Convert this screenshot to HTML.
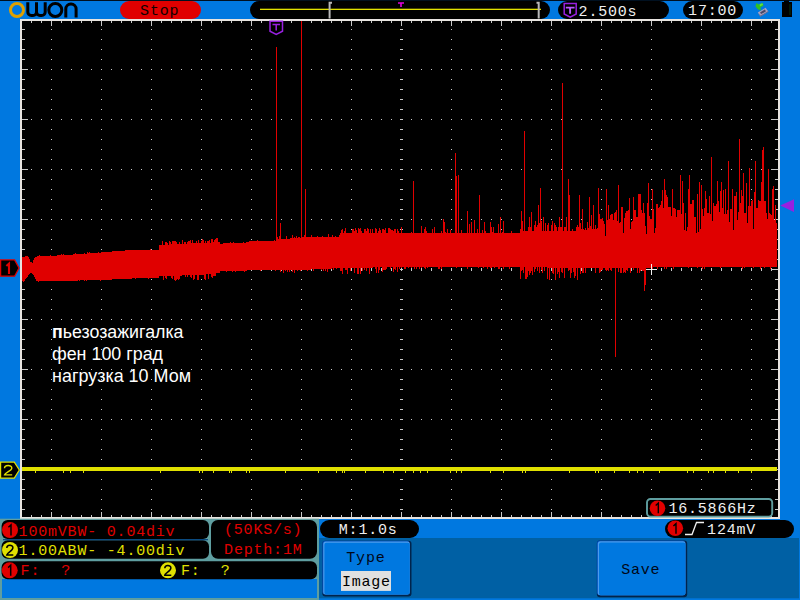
<!DOCTYPE html>
<html><head><meta charset="utf-8"><title>OWON</title>
<style>
html,body{margin:0;padding:0;background:#0078e0;}
body{width:800px;height:600px;overflow:hidden;position:relative;font-family:"Liberation Mono",monospace;}
svg{position:absolute;left:0;top:0;display:block}
text{font-family:"Liberation Mono",monospace;font-size:15px;letter-spacing:0.8px;}
.a{font-family:"Liberation Sans",sans-serif;font-size:17.5px;letter-spacing:0;}
</style></head><body>
<svg width="800" height="600" viewBox="0 0 800 600">
<rect x="0" y="0" width="800" height="600" fill="#0078e0"/>
<rect x="0" y="0" width="800" height="1" fill="#001020"/>
<!-- lower dark area -->
<rect x="319" y="538" width="480" height="60.3" fill="#0060a4"/>

<!-- logo -->
<g fill="none" stroke-width="3" stroke-linejoin="round">
<circle cx="17" cy="10" r="6.5" stroke="#e0a000"/>
<path d="M27.8 2.3V12a3.5 3.5 0 0 0 3.5 3.5h1.7a3.5 3.5 0 0 0 3.5-3.5V2.3M36.5 12a3.5 3.5 0 0 0 3.5 3.5h1.7a3.5 3.5 0 0 0 3.5-3.5V2.3" stroke="#000"/>
<circle cx="55.3" cy="10" r="6.5" stroke="#000"/>
<path d="M65.8 17.5V9a5 5 0 0 1 5-5h0.3a5 5 0 0 1 5 5v8.5" stroke="#000"/>
</g>

<!-- Stop -->
<rect x="120" y="1" width="81" height="18" rx="9" fill="#e00000"/>
<text x="140.1" y="15" fill="#100000">Stop</text>

<!-- position bar -->
<rect x="250" y="1" width="300" height="18" rx="9" fill="#000"/>
<rect x="260" y="8.7" width="281" height="1.3" fill="#e0e000"/>
<path d="M332 2.8H329.6V18.6" fill="none" stroke="#b8b8b8" stroke-width="2"/>
<path d="M536.5 2.8H538.7V18.6" fill="none" stroke="#b8b8b8" stroke-width="2"/>
<path d="M398 3H404M401 3V7" stroke="#e000e0" stroke-width="1.6" fill="none"/>

<!-- T time pill -->
<rect x="558" y="1" width="111" height="18" rx="9" fill="#000"/>
<path d="M564.2 3.5H576.2V14L570.2 17.2L564.2 14Z" fill="#000" stroke="#9820e0" stroke-width="1.5"/>
<path d="M565.8 7.6H574.6M570.1 7.6V13.8" stroke="#b858ff" stroke-width="1.9" fill="none"/>
<text x="578.6" y="15.8" fill="#f0f0f0">2.500s</text>

<!-- clock -->
<rect x="683" y="1" width="60" height="18" rx="9" fill="#000"/>
<text x="688.1" y="15.1" fill="#f0f0f0">17:00</text>

<!-- save icon -->
<g>
<path d="M757.8 12.6L765.6 7.8L768.4 11.6L760.4 16.6Z" fill="#a8a0c0"/>
<path d="M758 13.3L760.4 16.8L768.4 11.8L768.2 11L760.5 15.6Z" fill="#686888"/>
<path d="M760 12.4L764.8 9.6L766 11.3L761.2 14.1Z" fill="#484868"/>
<path d="M755.4 6.2L756.6 3L758.6 4.4L762.6 3L763.6 5.6L760.4 7.4L761 10.4L757.8 9.2Z" fill="#30c020"/>
<path d="M759.6 4.2L762.4 3.3L763 5L760 6.2Z" fill="#60e040"/>
</g>
<!-- battery -->
<rect x="782" y="2" width="10" height="15" fill="#000"/>
<rect x="784" y="0.8" width="5" height="1.4" fill="#000"/>
<rect x="789.6" y="4" width="0.8" height="11" fill="#0a4010"/>

<!-- plot -->
<rect x="20" y="19" width="760" height="500" fill="#e8e4e0"/>
<rect x="22" y="21" width="756" height="496" fill="#000"/>
<g fill="#c8c8c8" shape-rendering="crispEdges">
<rect x="51" y="29" width="1" height="1"/>
<rect x="51" y="39" width="1" height="1"/>
<rect x="51" y="49" width="1" height="1"/>
<rect x="51" y="59" width="1" height="1"/>
<rect x="51" y="69" width="1" height="1"/>
<rect x="51" y="79" width="1" height="1"/>
<rect x="51" y="89" width="1" height="1"/>
<rect x="51" y="99" width="1" height="1"/>
<rect x="51" y="109" width="1" height="1"/>
<rect x="51" y="119" width="1" height="1"/>
<rect x="51" y="129" width="1" height="1"/>
<rect x="51" y="139" width="1" height="1"/>
<rect x="51" y="149" width="1" height="1"/>
<rect x="51" y="159" width="1" height="1"/>
<rect x="51" y="169" width="1" height="1"/>
<rect x="51" y="179" width="1" height="1"/>
<rect x="51" y="189" width="1" height="1"/>
<rect x="51" y="199" width="1" height="1"/>
<rect x="51" y="209" width="1" height="1"/>
<rect x="51" y="219" width="1" height="1"/>
<rect x="51" y="229" width="1" height="1"/>
<rect x="51" y="239" width="1" height="1"/>
<rect x="51" y="249" width="1" height="1"/>
<rect x="51" y="259" width="1" height="1"/>
<rect x="51" y="269" width="1" height="1"/>
<rect x="51" y="279" width="1" height="1"/>
<rect x="51" y="289" width="1" height="1"/>
<rect x="51" y="299" width="1" height="1"/>
<rect x="51" y="309" width="1" height="1"/>
<rect x="51" y="319" width="1" height="1"/>
<rect x="51" y="329" width="1" height="1"/>
<rect x="51" y="339" width="1" height="1"/>
<rect x="51" y="349" width="1" height="1"/>
<rect x="51" y="359" width="1" height="1"/>
<rect x="51" y="369" width="1" height="1"/>
<rect x="51" y="379" width="1" height="1"/>
<rect x="51" y="389" width="1" height="1"/>
<rect x="51" y="399" width="1" height="1"/>
<rect x="51" y="409" width="1" height="1"/>
<rect x="51" y="419" width="1" height="1"/>
<rect x="51" y="429" width="1" height="1"/>
<rect x="51" y="439" width="1" height="1"/>
<rect x="51" y="449" width="1" height="1"/>
<rect x="51" y="459" width="1" height="1"/>
<rect x="51" y="469" width="1" height="1"/>
<rect x="51" y="479" width="1" height="1"/>
<rect x="51" y="489" width="1" height="1"/>
<rect x="51" y="499" width="1" height="1"/>
<rect x="51" y="509" width="1" height="1"/>
<rect x="101" y="29" width="1" height="1"/>
<rect x="101" y="39" width="1" height="1"/>
<rect x="101" y="49" width="1" height="1"/>
<rect x="101" y="59" width="1" height="1"/>
<rect x="101" y="69" width="1" height="1"/>
<rect x="101" y="79" width="1" height="1"/>
<rect x="101" y="89" width="1" height="1"/>
<rect x="101" y="99" width="1" height="1"/>
<rect x="101" y="109" width="1" height="1"/>
<rect x="101" y="119" width="1" height="1"/>
<rect x="101" y="129" width="1" height="1"/>
<rect x="101" y="139" width="1" height="1"/>
<rect x="101" y="149" width="1" height="1"/>
<rect x="101" y="159" width="1" height="1"/>
<rect x="101" y="169" width="1" height="1"/>
<rect x="101" y="179" width="1" height="1"/>
<rect x="101" y="189" width="1" height="1"/>
<rect x="101" y="199" width="1" height="1"/>
<rect x="101" y="209" width="1" height="1"/>
<rect x="101" y="219" width="1" height="1"/>
<rect x="101" y="229" width="1" height="1"/>
<rect x="101" y="239" width="1" height="1"/>
<rect x="101" y="249" width="1" height="1"/>
<rect x="101" y="259" width="1" height="1"/>
<rect x="101" y="269" width="1" height="1"/>
<rect x="101" y="279" width="1" height="1"/>
<rect x="101" y="289" width="1" height="1"/>
<rect x="101" y="299" width="1" height="1"/>
<rect x="101" y="309" width="1" height="1"/>
<rect x="101" y="319" width="1" height="1"/>
<rect x="101" y="329" width="1" height="1"/>
<rect x="101" y="339" width="1" height="1"/>
<rect x="101" y="349" width="1" height="1"/>
<rect x="101" y="359" width="1" height="1"/>
<rect x="101" y="369" width="1" height="1"/>
<rect x="101" y="379" width="1" height="1"/>
<rect x="101" y="389" width="1" height="1"/>
<rect x="101" y="399" width="1" height="1"/>
<rect x="101" y="409" width="1" height="1"/>
<rect x="101" y="419" width="1" height="1"/>
<rect x="101" y="429" width="1" height="1"/>
<rect x="101" y="439" width="1" height="1"/>
<rect x="101" y="449" width="1" height="1"/>
<rect x="101" y="459" width="1" height="1"/>
<rect x="101" y="469" width="1" height="1"/>
<rect x="101" y="479" width="1" height="1"/>
<rect x="101" y="489" width="1" height="1"/>
<rect x="101" y="499" width="1" height="1"/>
<rect x="101" y="509" width="1" height="1"/>
<rect x="151" y="29" width="1" height="1"/>
<rect x="151" y="39" width="1" height="1"/>
<rect x="151" y="49" width="1" height="1"/>
<rect x="151" y="59" width="1" height="1"/>
<rect x="151" y="69" width="1" height="1"/>
<rect x="151" y="79" width="1" height="1"/>
<rect x="151" y="89" width="1" height="1"/>
<rect x="151" y="99" width="1" height="1"/>
<rect x="151" y="109" width="1" height="1"/>
<rect x="151" y="119" width="1" height="1"/>
<rect x="151" y="129" width="1" height="1"/>
<rect x="151" y="139" width="1" height="1"/>
<rect x="151" y="149" width="1" height="1"/>
<rect x="151" y="159" width="1" height="1"/>
<rect x="151" y="169" width="1" height="1"/>
<rect x="151" y="179" width="1" height="1"/>
<rect x="151" y="189" width="1" height="1"/>
<rect x="151" y="199" width="1" height="1"/>
<rect x="151" y="209" width="1" height="1"/>
<rect x="151" y="219" width="1" height="1"/>
<rect x="151" y="229" width="1" height="1"/>
<rect x="151" y="239" width="1" height="1"/>
<rect x="151" y="249" width="1" height="1"/>
<rect x="151" y="259" width="1" height="1"/>
<rect x="151" y="269" width="1" height="1"/>
<rect x="151" y="279" width="1" height="1"/>
<rect x="151" y="289" width="1" height="1"/>
<rect x="151" y="299" width="1" height="1"/>
<rect x="151" y="309" width="1" height="1"/>
<rect x="151" y="319" width="1" height="1"/>
<rect x="151" y="329" width="1" height="1"/>
<rect x="151" y="339" width="1" height="1"/>
<rect x="151" y="349" width="1" height="1"/>
<rect x="151" y="359" width="1" height="1"/>
<rect x="151" y="369" width="1" height="1"/>
<rect x="151" y="379" width="1" height="1"/>
<rect x="151" y="389" width="1" height="1"/>
<rect x="151" y="399" width="1" height="1"/>
<rect x="151" y="409" width="1" height="1"/>
<rect x="151" y="419" width="1" height="1"/>
<rect x="151" y="429" width="1" height="1"/>
<rect x="151" y="439" width="1" height="1"/>
<rect x="151" y="449" width="1" height="1"/>
<rect x="151" y="459" width="1" height="1"/>
<rect x="151" y="469" width="1" height="1"/>
<rect x="151" y="479" width="1" height="1"/>
<rect x="151" y="489" width="1" height="1"/>
<rect x="151" y="499" width="1" height="1"/>
<rect x="151" y="509" width="1" height="1"/>
<rect x="201" y="29" width="1" height="1"/>
<rect x="201" y="39" width="1" height="1"/>
<rect x="201" y="49" width="1" height="1"/>
<rect x="201" y="59" width="1" height="1"/>
<rect x="201" y="69" width="1" height="1"/>
<rect x="201" y="79" width="1" height="1"/>
<rect x="201" y="89" width="1" height="1"/>
<rect x="201" y="99" width="1" height="1"/>
<rect x="201" y="109" width="1" height="1"/>
<rect x="201" y="119" width="1" height="1"/>
<rect x="201" y="129" width="1" height="1"/>
<rect x="201" y="139" width="1" height="1"/>
<rect x="201" y="149" width="1" height="1"/>
<rect x="201" y="159" width="1" height="1"/>
<rect x="201" y="169" width="1" height="1"/>
<rect x="201" y="179" width="1" height="1"/>
<rect x="201" y="189" width="1" height="1"/>
<rect x="201" y="199" width="1" height="1"/>
<rect x="201" y="209" width="1" height="1"/>
<rect x="201" y="219" width="1" height="1"/>
<rect x="201" y="229" width="1" height="1"/>
<rect x="201" y="239" width="1" height="1"/>
<rect x="201" y="249" width="1" height="1"/>
<rect x="201" y="259" width="1" height="1"/>
<rect x="201" y="269" width="1" height="1"/>
<rect x="201" y="279" width="1" height="1"/>
<rect x="201" y="289" width="1" height="1"/>
<rect x="201" y="299" width="1" height="1"/>
<rect x="201" y="309" width="1" height="1"/>
<rect x="201" y="319" width="1" height="1"/>
<rect x="201" y="329" width="1" height="1"/>
<rect x="201" y="339" width="1" height="1"/>
<rect x="201" y="349" width="1" height="1"/>
<rect x="201" y="359" width="1" height="1"/>
<rect x="201" y="369" width="1" height="1"/>
<rect x="201" y="379" width="1" height="1"/>
<rect x="201" y="389" width="1" height="1"/>
<rect x="201" y="399" width="1" height="1"/>
<rect x="201" y="409" width="1" height="1"/>
<rect x="201" y="419" width="1" height="1"/>
<rect x="201" y="429" width="1" height="1"/>
<rect x="201" y="439" width="1" height="1"/>
<rect x="201" y="449" width="1" height="1"/>
<rect x="201" y="459" width="1" height="1"/>
<rect x="201" y="469" width="1" height="1"/>
<rect x="201" y="479" width="1" height="1"/>
<rect x="201" y="489" width="1" height="1"/>
<rect x="201" y="499" width="1" height="1"/>
<rect x="201" y="509" width="1" height="1"/>
<rect x="251" y="29" width="1" height="1"/>
<rect x="251" y="39" width="1" height="1"/>
<rect x="251" y="49" width="1" height="1"/>
<rect x="251" y="59" width="1" height="1"/>
<rect x="251" y="69" width="1" height="1"/>
<rect x="251" y="79" width="1" height="1"/>
<rect x="251" y="89" width="1" height="1"/>
<rect x="251" y="99" width="1" height="1"/>
<rect x="251" y="109" width="1" height="1"/>
<rect x="251" y="119" width="1" height="1"/>
<rect x="251" y="129" width="1" height="1"/>
<rect x="251" y="139" width="1" height="1"/>
<rect x="251" y="149" width="1" height="1"/>
<rect x="251" y="159" width="1" height="1"/>
<rect x="251" y="169" width="1" height="1"/>
<rect x="251" y="179" width="1" height="1"/>
<rect x="251" y="189" width="1" height="1"/>
<rect x="251" y="199" width="1" height="1"/>
<rect x="251" y="209" width="1" height="1"/>
<rect x="251" y="219" width="1" height="1"/>
<rect x="251" y="229" width="1" height="1"/>
<rect x="251" y="239" width="1" height="1"/>
<rect x="251" y="249" width="1" height="1"/>
<rect x="251" y="259" width="1" height="1"/>
<rect x="251" y="269" width="1" height="1"/>
<rect x="251" y="279" width="1" height="1"/>
<rect x="251" y="289" width="1" height="1"/>
<rect x="251" y="299" width="1" height="1"/>
<rect x="251" y="309" width="1" height="1"/>
<rect x="251" y="319" width="1" height="1"/>
<rect x="251" y="329" width="1" height="1"/>
<rect x="251" y="339" width="1" height="1"/>
<rect x="251" y="349" width="1" height="1"/>
<rect x="251" y="359" width="1" height="1"/>
<rect x="251" y="369" width="1" height="1"/>
<rect x="251" y="379" width="1" height="1"/>
<rect x="251" y="389" width="1" height="1"/>
<rect x="251" y="399" width="1" height="1"/>
<rect x="251" y="409" width="1" height="1"/>
<rect x="251" y="419" width="1" height="1"/>
<rect x="251" y="429" width="1" height="1"/>
<rect x="251" y="439" width="1" height="1"/>
<rect x="251" y="449" width="1" height="1"/>
<rect x="251" y="459" width="1" height="1"/>
<rect x="251" y="469" width="1" height="1"/>
<rect x="251" y="479" width="1" height="1"/>
<rect x="251" y="489" width="1" height="1"/>
<rect x="251" y="499" width="1" height="1"/>
<rect x="251" y="509" width="1" height="1"/>
<rect x="301" y="29" width="1" height="1"/>
<rect x="301" y="39" width="1" height="1"/>
<rect x="301" y="49" width="1" height="1"/>
<rect x="301" y="59" width="1" height="1"/>
<rect x="301" y="69" width="1" height="1"/>
<rect x="301" y="79" width="1" height="1"/>
<rect x="301" y="89" width="1" height="1"/>
<rect x="301" y="99" width="1" height="1"/>
<rect x="301" y="109" width="1" height="1"/>
<rect x="301" y="119" width="1" height="1"/>
<rect x="301" y="129" width="1" height="1"/>
<rect x="301" y="139" width="1" height="1"/>
<rect x="301" y="149" width="1" height="1"/>
<rect x="301" y="159" width="1" height="1"/>
<rect x="301" y="169" width="1" height="1"/>
<rect x="301" y="179" width="1" height="1"/>
<rect x="301" y="189" width="1" height="1"/>
<rect x="301" y="199" width="1" height="1"/>
<rect x="301" y="209" width="1" height="1"/>
<rect x="301" y="219" width="1" height="1"/>
<rect x="301" y="229" width="1" height="1"/>
<rect x="301" y="239" width="1" height="1"/>
<rect x="301" y="249" width="1" height="1"/>
<rect x="301" y="259" width="1" height="1"/>
<rect x="301" y="269" width="1" height="1"/>
<rect x="301" y="279" width="1" height="1"/>
<rect x="301" y="289" width="1" height="1"/>
<rect x="301" y="299" width="1" height="1"/>
<rect x="301" y="309" width="1" height="1"/>
<rect x="301" y="319" width="1" height="1"/>
<rect x="301" y="329" width="1" height="1"/>
<rect x="301" y="339" width="1" height="1"/>
<rect x="301" y="349" width="1" height="1"/>
<rect x="301" y="359" width="1" height="1"/>
<rect x="301" y="369" width="1" height="1"/>
<rect x="301" y="379" width="1" height="1"/>
<rect x="301" y="389" width="1" height="1"/>
<rect x="301" y="399" width="1" height="1"/>
<rect x="301" y="409" width="1" height="1"/>
<rect x="301" y="419" width="1" height="1"/>
<rect x="301" y="429" width="1" height="1"/>
<rect x="301" y="439" width="1" height="1"/>
<rect x="301" y="449" width="1" height="1"/>
<rect x="301" y="459" width="1" height="1"/>
<rect x="301" y="469" width="1" height="1"/>
<rect x="301" y="479" width="1" height="1"/>
<rect x="301" y="489" width="1" height="1"/>
<rect x="301" y="499" width="1" height="1"/>
<rect x="301" y="509" width="1" height="1"/>
<rect x="351" y="29" width="1" height="1"/>
<rect x="351" y="39" width="1" height="1"/>
<rect x="351" y="49" width="1" height="1"/>
<rect x="351" y="59" width="1" height="1"/>
<rect x="351" y="69" width="1" height="1"/>
<rect x="351" y="79" width="1" height="1"/>
<rect x="351" y="89" width="1" height="1"/>
<rect x="351" y="99" width="1" height="1"/>
<rect x="351" y="109" width="1" height="1"/>
<rect x="351" y="119" width="1" height="1"/>
<rect x="351" y="129" width="1" height="1"/>
<rect x="351" y="139" width="1" height="1"/>
<rect x="351" y="149" width="1" height="1"/>
<rect x="351" y="159" width="1" height="1"/>
<rect x="351" y="169" width="1" height="1"/>
<rect x="351" y="179" width="1" height="1"/>
<rect x="351" y="189" width="1" height="1"/>
<rect x="351" y="199" width="1" height="1"/>
<rect x="351" y="209" width="1" height="1"/>
<rect x="351" y="219" width="1" height="1"/>
<rect x="351" y="229" width="1" height="1"/>
<rect x="351" y="239" width="1" height="1"/>
<rect x="351" y="249" width="1" height="1"/>
<rect x="351" y="259" width="1" height="1"/>
<rect x="351" y="269" width="1" height="1"/>
<rect x="351" y="279" width="1" height="1"/>
<rect x="351" y="289" width="1" height="1"/>
<rect x="351" y="299" width="1" height="1"/>
<rect x="351" y="309" width="1" height="1"/>
<rect x="351" y="319" width="1" height="1"/>
<rect x="351" y="329" width="1" height="1"/>
<rect x="351" y="339" width="1" height="1"/>
<rect x="351" y="349" width="1" height="1"/>
<rect x="351" y="359" width="1" height="1"/>
<rect x="351" y="369" width="1" height="1"/>
<rect x="351" y="379" width="1" height="1"/>
<rect x="351" y="389" width="1" height="1"/>
<rect x="351" y="399" width="1" height="1"/>
<rect x="351" y="409" width="1" height="1"/>
<rect x="351" y="419" width="1" height="1"/>
<rect x="351" y="429" width="1" height="1"/>
<rect x="351" y="439" width="1" height="1"/>
<rect x="351" y="449" width="1" height="1"/>
<rect x="351" y="459" width="1" height="1"/>
<rect x="351" y="469" width="1" height="1"/>
<rect x="351" y="479" width="1" height="1"/>
<rect x="351" y="489" width="1" height="1"/>
<rect x="351" y="499" width="1" height="1"/>
<rect x="351" y="509" width="1" height="1"/>
<rect x="451" y="29" width="1" height="1"/>
<rect x="451" y="39" width="1" height="1"/>
<rect x="451" y="49" width="1" height="1"/>
<rect x="451" y="59" width="1" height="1"/>
<rect x="451" y="69" width="1" height="1"/>
<rect x="451" y="79" width="1" height="1"/>
<rect x="451" y="89" width="1" height="1"/>
<rect x="451" y="99" width="1" height="1"/>
<rect x="451" y="109" width="1" height="1"/>
<rect x="451" y="119" width="1" height="1"/>
<rect x="451" y="129" width="1" height="1"/>
<rect x="451" y="139" width="1" height="1"/>
<rect x="451" y="149" width="1" height="1"/>
<rect x="451" y="159" width="1" height="1"/>
<rect x="451" y="169" width="1" height="1"/>
<rect x="451" y="179" width="1" height="1"/>
<rect x="451" y="189" width="1" height="1"/>
<rect x="451" y="199" width="1" height="1"/>
<rect x="451" y="209" width="1" height="1"/>
<rect x="451" y="219" width="1" height="1"/>
<rect x="451" y="229" width="1" height="1"/>
<rect x="451" y="239" width="1" height="1"/>
<rect x="451" y="249" width="1" height="1"/>
<rect x="451" y="259" width="1" height="1"/>
<rect x="451" y="269" width="1" height="1"/>
<rect x="451" y="279" width="1" height="1"/>
<rect x="451" y="289" width="1" height="1"/>
<rect x="451" y="299" width="1" height="1"/>
<rect x="451" y="309" width="1" height="1"/>
<rect x="451" y="319" width="1" height="1"/>
<rect x="451" y="329" width="1" height="1"/>
<rect x="451" y="339" width="1" height="1"/>
<rect x="451" y="349" width="1" height="1"/>
<rect x="451" y="359" width="1" height="1"/>
<rect x="451" y="369" width="1" height="1"/>
<rect x="451" y="379" width="1" height="1"/>
<rect x="451" y="389" width="1" height="1"/>
<rect x="451" y="399" width="1" height="1"/>
<rect x="451" y="409" width="1" height="1"/>
<rect x="451" y="419" width="1" height="1"/>
<rect x="451" y="429" width="1" height="1"/>
<rect x="451" y="439" width="1" height="1"/>
<rect x="451" y="449" width="1" height="1"/>
<rect x="451" y="459" width="1" height="1"/>
<rect x="451" y="469" width="1" height="1"/>
<rect x="451" y="479" width="1" height="1"/>
<rect x="451" y="489" width="1" height="1"/>
<rect x="451" y="499" width="1" height="1"/>
<rect x="451" y="509" width="1" height="1"/>
<rect x="501" y="29" width="1" height="1"/>
<rect x="501" y="39" width="1" height="1"/>
<rect x="501" y="49" width="1" height="1"/>
<rect x="501" y="59" width="1" height="1"/>
<rect x="501" y="69" width="1" height="1"/>
<rect x="501" y="79" width="1" height="1"/>
<rect x="501" y="89" width="1" height="1"/>
<rect x="501" y="99" width="1" height="1"/>
<rect x="501" y="109" width="1" height="1"/>
<rect x="501" y="119" width="1" height="1"/>
<rect x="501" y="129" width="1" height="1"/>
<rect x="501" y="139" width="1" height="1"/>
<rect x="501" y="149" width="1" height="1"/>
<rect x="501" y="159" width="1" height="1"/>
<rect x="501" y="169" width="1" height="1"/>
<rect x="501" y="179" width="1" height="1"/>
<rect x="501" y="189" width="1" height="1"/>
<rect x="501" y="199" width="1" height="1"/>
<rect x="501" y="209" width="1" height="1"/>
<rect x="501" y="219" width="1" height="1"/>
<rect x="501" y="229" width="1" height="1"/>
<rect x="501" y="239" width="1" height="1"/>
<rect x="501" y="249" width="1" height="1"/>
<rect x="501" y="259" width="1" height="1"/>
<rect x="501" y="269" width="1" height="1"/>
<rect x="501" y="279" width="1" height="1"/>
<rect x="501" y="289" width="1" height="1"/>
<rect x="501" y="299" width="1" height="1"/>
<rect x="501" y="309" width="1" height="1"/>
<rect x="501" y="319" width="1" height="1"/>
<rect x="501" y="329" width="1" height="1"/>
<rect x="501" y="339" width="1" height="1"/>
<rect x="501" y="349" width="1" height="1"/>
<rect x="501" y="359" width="1" height="1"/>
<rect x="501" y="369" width="1" height="1"/>
<rect x="501" y="379" width="1" height="1"/>
<rect x="501" y="389" width="1" height="1"/>
<rect x="501" y="399" width="1" height="1"/>
<rect x="501" y="409" width="1" height="1"/>
<rect x="501" y="419" width="1" height="1"/>
<rect x="501" y="429" width="1" height="1"/>
<rect x="501" y="439" width="1" height="1"/>
<rect x="501" y="449" width="1" height="1"/>
<rect x="501" y="459" width="1" height="1"/>
<rect x="501" y="469" width="1" height="1"/>
<rect x="501" y="479" width="1" height="1"/>
<rect x="501" y="489" width="1" height="1"/>
<rect x="501" y="499" width="1" height="1"/>
<rect x="501" y="509" width="1" height="1"/>
<rect x="551" y="29" width="1" height="1"/>
<rect x="551" y="39" width="1" height="1"/>
<rect x="551" y="49" width="1" height="1"/>
<rect x="551" y="59" width="1" height="1"/>
<rect x="551" y="69" width="1" height="1"/>
<rect x="551" y="79" width="1" height="1"/>
<rect x="551" y="89" width="1" height="1"/>
<rect x="551" y="99" width="1" height="1"/>
<rect x="551" y="109" width="1" height="1"/>
<rect x="551" y="119" width="1" height="1"/>
<rect x="551" y="129" width="1" height="1"/>
<rect x="551" y="139" width="1" height="1"/>
<rect x="551" y="149" width="1" height="1"/>
<rect x="551" y="159" width="1" height="1"/>
<rect x="551" y="169" width="1" height="1"/>
<rect x="551" y="179" width="1" height="1"/>
<rect x="551" y="189" width="1" height="1"/>
<rect x="551" y="199" width="1" height="1"/>
<rect x="551" y="209" width="1" height="1"/>
<rect x="551" y="219" width="1" height="1"/>
<rect x="551" y="229" width="1" height="1"/>
<rect x="551" y="239" width="1" height="1"/>
<rect x="551" y="249" width="1" height="1"/>
<rect x="551" y="259" width="1" height="1"/>
<rect x="551" y="269" width="1" height="1"/>
<rect x="551" y="279" width="1" height="1"/>
<rect x="551" y="289" width="1" height="1"/>
<rect x="551" y="299" width="1" height="1"/>
<rect x="551" y="309" width="1" height="1"/>
<rect x="551" y="319" width="1" height="1"/>
<rect x="551" y="329" width="1" height="1"/>
<rect x="551" y="339" width="1" height="1"/>
<rect x="551" y="349" width="1" height="1"/>
<rect x="551" y="359" width="1" height="1"/>
<rect x="551" y="369" width="1" height="1"/>
<rect x="551" y="379" width="1" height="1"/>
<rect x="551" y="389" width="1" height="1"/>
<rect x="551" y="399" width="1" height="1"/>
<rect x="551" y="409" width="1" height="1"/>
<rect x="551" y="419" width="1" height="1"/>
<rect x="551" y="429" width="1" height="1"/>
<rect x="551" y="439" width="1" height="1"/>
<rect x="551" y="449" width="1" height="1"/>
<rect x="551" y="459" width="1" height="1"/>
<rect x="551" y="469" width="1" height="1"/>
<rect x="551" y="479" width="1" height="1"/>
<rect x="551" y="489" width="1" height="1"/>
<rect x="551" y="499" width="1" height="1"/>
<rect x="551" y="509" width="1" height="1"/>
<rect x="601" y="29" width="1" height="1"/>
<rect x="601" y="39" width="1" height="1"/>
<rect x="601" y="49" width="1" height="1"/>
<rect x="601" y="59" width="1" height="1"/>
<rect x="601" y="69" width="1" height="1"/>
<rect x="601" y="79" width="1" height="1"/>
<rect x="601" y="89" width="1" height="1"/>
<rect x="601" y="99" width="1" height="1"/>
<rect x="601" y="109" width="1" height="1"/>
<rect x="601" y="119" width="1" height="1"/>
<rect x="601" y="129" width="1" height="1"/>
<rect x="601" y="139" width="1" height="1"/>
<rect x="601" y="149" width="1" height="1"/>
<rect x="601" y="159" width="1" height="1"/>
<rect x="601" y="169" width="1" height="1"/>
<rect x="601" y="179" width="1" height="1"/>
<rect x="601" y="189" width="1" height="1"/>
<rect x="601" y="199" width="1" height="1"/>
<rect x="601" y="209" width="1" height="1"/>
<rect x="601" y="219" width="1" height="1"/>
<rect x="601" y="229" width="1" height="1"/>
<rect x="601" y="239" width="1" height="1"/>
<rect x="601" y="249" width="1" height="1"/>
<rect x="601" y="259" width="1" height="1"/>
<rect x="601" y="269" width="1" height="1"/>
<rect x="601" y="279" width="1" height="1"/>
<rect x="601" y="289" width="1" height="1"/>
<rect x="601" y="299" width="1" height="1"/>
<rect x="601" y="309" width="1" height="1"/>
<rect x="601" y="319" width="1" height="1"/>
<rect x="601" y="329" width="1" height="1"/>
<rect x="601" y="339" width="1" height="1"/>
<rect x="601" y="349" width="1" height="1"/>
<rect x="601" y="359" width="1" height="1"/>
<rect x="601" y="369" width="1" height="1"/>
<rect x="601" y="379" width="1" height="1"/>
<rect x="601" y="389" width="1" height="1"/>
<rect x="601" y="399" width="1" height="1"/>
<rect x="601" y="409" width="1" height="1"/>
<rect x="601" y="419" width="1" height="1"/>
<rect x="601" y="429" width="1" height="1"/>
<rect x="601" y="439" width="1" height="1"/>
<rect x="601" y="449" width="1" height="1"/>
<rect x="601" y="459" width="1" height="1"/>
<rect x="601" y="469" width="1" height="1"/>
<rect x="601" y="479" width="1" height="1"/>
<rect x="601" y="489" width="1" height="1"/>
<rect x="601" y="499" width="1" height="1"/>
<rect x="601" y="509" width="1" height="1"/>
<rect x="651" y="29" width="1" height="1"/>
<rect x="651" y="39" width="1" height="1"/>
<rect x="651" y="49" width="1" height="1"/>
<rect x="651" y="59" width="1" height="1"/>
<rect x="651" y="69" width="1" height="1"/>
<rect x="651" y="79" width="1" height="1"/>
<rect x="651" y="89" width="1" height="1"/>
<rect x="651" y="99" width="1" height="1"/>
<rect x="651" y="109" width="1" height="1"/>
<rect x="651" y="119" width="1" height="1"/>
<rect x="651" y="129" width="1" height="1"/>
<rect x="651" y="139" width="1" height="1"/>
<rect x="651" y="149" width="1" height="1"/>
<rect x="651" y="159" width="1" height="1"/>
<rect x="651" y="169" width="1" height="1"/>
<rect x="651" y="179" width="1" height="1"/>
<rect x="651" y="189" width="1" height="1"/>
<rect x="651" y="199" width="1" height="1"/>
<rect x="651" y="209" width="1" height="1"/>
<rect x="651" y="219" width="1" height="1"/>
<rect x="651" y="229" width="1" height="1"/>
<rect x="651" y="239" width="1" height="1"/>
<rect x="651" y="249" width="1" height="1"/>
<rect x="651" y="259" width="1" height="1"/>
<rect x="651" y="269" width="1" height="1"/>
<rect x="651" y="279" width="1" height="1"/>
<rect x="651" y="289" width="1" height="1"/>
<rect x="651" y="299" width="1" height="1"/>
<rect x="651" y="309" width="1" height="1"/>
<rect x="651" y="319" width="1" height="1"/>
<rect x="651" y="329" width="1" height="1"/>
<rect x="651" y="339" width="1" height="1"/>
<rect x="651" y="349" width="1" height="1"/>
<rect x="651" y="359" width="1" height="1"/>
<rect x="651" y="369" width="1" height="1"/>
<rect x="651" y="379" width="1" height="1"/>
<rect x="651" y="389" width="1" height="1"/>
<rect x="651" y="399" width="1" height="1"/>
<rect x="651" y="409" width="1" height="1"/>
<rect x="651" y="419" width="1" height="1"/>
<rect x="651" y="429" width="1" height="1"/>
<rect x="651" y="439" width="1" height="1"/>
<rect x="651" y="449" width="1" height="1"/>
<rect x="651" y="459" width="1" height="1"/>
<rect x="651" y="469" width="1" height="1"/>
<rect x="651" y="479" width="1" height="1"/>
<rect x="651" y="489" width="1" height="1"/>
<rect x="651" y="499" width="1" height="1"/>
<rect x="651" y="509" width="1" height="1"/>
<rect x="701" y="29" width="1" height="1"/>
<rect x="701" y="39" width="1" height="1"/>
<rect x="701" y="49" width="1" height="1"/>
<rect x="701" y="59" width="1" height="1"/>
<rect x="701" y="69" width="1" height="1"/>
<rect x="701" y="79" width="1" height="1"/>
<rect x="701" y="89" width="1" height="1"/>
<rect x="701" y="99" width="1" height="1"/>
<rect x="701" y="109" width="1" height="1"/>
<rect x="701" y="119" width="1" height="1"/>
<rect x="701" y="129" width="1" height="1"/>
<rect x="701" y="139" width="1" height="1"/>
<rect x="701" y="149" width="1" height="1"/>
<rect x="701" y="159" width="1" height="1"/>
<rect x="701" y="169" width="1" height="1"/>
<rect x="701" y="179" width="1" height="1"/>
<rect x="701" y="189" width="1" height="1"/>
<rect x="701" y="199" width="1" height="1"/>
<rect x="701" y="209" width="1" height="1"/>
<rect x="701" y="219" width="1" height="1"/>
<rect x="701" y="229" width="1" height="1"/>
<rect x="701" y="239" width="1" height="1"/>
<rect x="701" y="249" width="1" height="1"/>
<rect x="701" y="259" width="1" height="1"/>
<rect x="701" y="269" width="1" height="1"/>
<rect x="701" y="279" width="1" height="1"/>
<rect x="701" y="289" width="1" height="1"/>
<rect x="701" y="299" width="1" height="1"/>
<rect x="701" y="309" width="1" height="1"/>
<rect x="701" y="319" width="1" height="1"/>
<rect x="701" y="329" width="1" height="1"/>
<rect x="701" y="339" width="1" height="1"/>
<rect x="701" y="349" width="1" height="1"/>
<rect x="701" y="359" width="1" height="1"/>
<rect x="701" y="369" width="1" height="1"/>
<rect x="701" y="379" width="1" height="1"/>
<rect x="701" y="389" width="1" height="1"/>
<rect x="701" y="399" width="1" height="1"/>
<rect x="701" y="409" width="1" height="1"/>
<rect x="701" y="419" width="1" height="1"/>
<rect x="701" y="429" width="1" height="1"/>
<rect x="701" y="439" width="1" height="1"/>
<rect x="701" y="449" width="1" height="1"/>
<rect x="701" y="459" width="1" height="1"/>
<rect x="701" y="469" width="1" height="1"/>
<rect x="701" y="479" width="1" height="1"/>
<rect x="701" y="489" width="1" height="1"/>
<rect x="701" y="499" width="1" height="1"/>
<rect x="701" y="509" width="1" height="1"/>
<rect x="751" y="29" width="1" height="1"/>
<rect x="751" y="39" width="1" height="1"/>
<rect x="751" y="49" width="1" height="1"/>
<rect x="751" y="59" width="1" height="1"/>
<rect x="751" y="69" width="1" height="1"/>
<rect x="751" y="79" width="1" height="1"/>
<rect x="751" y="89" width="1" height="1"/>
<rect x="751" y="99" width="1" height="1"/>
<rect x="751" y="109" width="1" height="1"/>
<rect x="751" y="119" width="1" height="1"/>
<rect x="751" y="129" width="1" height="1"/>
<rect x="751" y="139" width="1" height="1"/>
<rect x="751" y="149" width="1" height="1"/>
<rect x="751" y="159" width="1" height="1"/>
<rect x="751" y="169" width="1" height="1"/>
<rect x="751" y="179" width="1" height="1"/>
<rect x="751" y="189" width="1" height="1"/>
<rect x="751" y="199" width="1" height="1"/>
<rect x="751" y="209" width="1" height="1"/>
<rect x="751" y="219" width="1" height="1"/>
<rect x="751" y="229" width="1" height="1"/>
<rect x="751" y="239" width="1" height="1"/>
<rect x="751" y="249" width="1" height="1"/>
<rect x="751" y="259" width="1" height="1"/>
<rect x="751" y="269" width="1" height="1"/>
<rect x="751" y="279" width="1" height="1"/>
<rect x="751" y="289" width="1" height="1"/>
<rect x="751" y="299" width="1" height="1"/>
<rect x="751" y="309" width="1" height="1"/>
<rect x="751" y="319" width="1" height="1"/>
<rect x="751" y="329" width="1" height="1"/>
<rect x="751" y="339" width="1" height="1"/>
<rect x="751" y="349" width="1" height="1"/>
<rect x="751" y="359" width="1" height="1"/>
<rect x="751" y="369" width="1" height="1"/>
<rect x="751" y="379" width="1" height="1"/>
<rect x="751" y="389" width="1" height="1"/>
<rect x="751" y="399" width="1" height="1"/>
<rect x="751" y="409" width="1" height="1"/>
<rect x="751" y="419" width="1" height="1"/>
<rect x="751" y="429" width="1" height="1"/>
<rect x="751" y="439" width="1" height="1"/>
<rect x="751" y="449" width="1" height="1"/>
<rect x="751" y="459" width="1" height="1"/>
<rect x="751" y="469" width="1" height="1"/>
<rect x="751" y="479" width="1" height="1"/>
<rect x="751" y="489" width="1" height="1"/>
<rect x="751" y="499" width="1" height="1"/>
<rect x="751" y="509" width="1" height="1"/>
<rect x="31" y="69" width="1" height="1"/>
<rect x="41" y="69" width="1" height="1"/>
<rect x="61" y="69" width="1" height="1"/>
<rect x="71" y="69" width="1" height="1"/>
<rect x="81" y="69" width="1" height="1"/>
<rect x="91" y="69" width="1" height="1"/>
<rect x="111" y="69" width="1" height="1"/>
<rect x="121" y="69" width="1" height="1"/>
<rect x="131" y="69" width="1" height="1"/>
<rect x="141" y="69" width="1" height="1"/>
<rect x="161" y="69" width="1" height="1"/>
<rect x="171" y="69" width="1" height="1"/>
<rect x="181" y="69" width="1" height="1"/>
<rect x="191" y="69" width="1" height="1"/>
<rect x="211" y="69" width="1" height="1"/>
<rect x="221" y="69" width="1" height="1"/>
<rect x="231" y="69" width="1" height="1"/>
<rect x="241" y="69" width="1" height="1"/>
<rect x="261" y="69" width="1" height="1"/>
<rect x="271" y="69" width="1" height="1"/>
<rect x="281" y="69" width="1" height="1"/>
<rect x="291" y="69" width="1" height="1"/>
<rect x="311" y="69" width="1" height="1"/>
<rect x="321" y="69" width="1" height="1"/>
<rect x="331" y="69" width="1" height="1"/>
<rect x="341" y="69" width="1" height="1"/>
<rect x="361" y="69" width="1" height="1"/>
<rect x="371" y="69" width="1" height="1"/>
<rect x="381" y="69" width="1" height="1"/>
<rect x="391" y="69" width="1" height="1"/>
<rect x="411" y="69" width="1" height="1"/>
<rect x="421" y="69" width="1" height="1"/>
<rect x="431" y="69" width="1" height="1"/>
<rect x="441" y="69" width="1" height="1"/>
<rect x="461" y="69" width="1" height="1"/>
<rect x="471" y="69" width="1" height="1"/>
<rect x="481" y="69" width="1" height="1"/>
<rect x="491" y="69" width="1" height="1"/>
<rect x="511" y="69" width="1" height="1"/>
<rect x="521" y="69" width="1" height="1"/>
<rect x="531" y="69" width="1" height="1"/>
<rect x="541" y="69" width="1" height="1"/>
<rect x="561" y="69" width="1" height="1"/>
<rect x="571" y="69" width="1" height="1"/>
<rect x="581" y="69" width="1" height="1"/>
<rect x="591" y="69" width="1" height="1"/>
<rect x="611" y="69" width="1" height="1"/>
<rect x="621" y="69" width="1" height="1"/>
<rect x="631" y="69" width="1" height="1"/>
<rect x="641" y="69" width="1" height="1"/>
<rect x="661" y="69" width="1" height="1"/>
<rect x="671" y="69" width="1" height="1"/>
<rect x="681" y="69" width="1" height="1"/>
<rect x="691" y="69" width="1" height="1"/>
<rect x="711" y="69" width="1" height="1"/>
<rect x="721" y="69" width="1" height="1"/>
<rect x="731" y="69" width="1" height="1"/>
<rect x="741" y="69" width="1" height="1"/>
<rect x="761" y="69" width="1" height="1"/>
<rect x="771" y="69" width="1" height="1"/>
<rect x="31" y="119" width="1" height="1"/>
<rect x="41" y="119" width="1" height="1"/>
<rect x="61" y="119" width="1" height="1"/>
<rect x="71" y="119" width="1" height="1"/>
<rect x="81" y="119" width="1" height="1"/>
<rect x="91" y="119" width="1" height="1"/>
<rect x="111" y="119" width="1" height="1"/>
<rect x="121" y="119" width="1" height="1"/>
<rect x="131" y="119" width="1" height="1"/>
<rect x="141" y="119" width="1" height="1"/>
<rect x="161" y="119" width="1" height="1"/>
<rect x="171" y="119" width="1" height="1"/>
<rect x="181" y="119" width="1" height="1"/>
<rect x="191" y="119" width="1" height="1"/>
<rect x="211" y="119" width="1" height="1"/>
<rect x="221" y="119" width="1" height="1"/>
<rect x="231" y="119" width="1" height="1"/>
<rect x="241" y="119" width="1" height="1"/>
<rect x="261" y="119" width="1" height="1"/>
<rect x="271" y="119" width="1" height="1"/>
<rect x="281" y="119" width="1" height="1"/>
<rect x="291" y="119" width="1" height="1"/>
<rect x="311" y="119" width="1" height="1"/>
<rect x="321" y="119" width="1" height="1"/>
<rect x="331" y="119" width="1" height="1"/>
<rect x="341" y="119" width="1" height="1"/>
<rect x="361" y="119" width="1" height="1"/>
<rect x="371" y="119" width="1" height="1"/>
<rect x="381" y="119" width="1" height="1"/>
<rect x="391" y="119" width="1" height="1"/>
<rect x="411" y="119" width="1" height="1"/>
<rect x="421" y="119" width="1" height="1"/>
<rect x="431" y="119" width="1" height="1"/>
<rect x="441" y="119" width="1" height="1"/>
<rect x="461" y="119" width="1" height="1"/>
<rect x="471" y="119" width="1" height="1"/>
<rect x="481" y="119" width="1" height="1"/>
<rect x="491" y="119" width="1" height="1"/>
<rect x="511" y="119" width="1" height="1"/>
<rect x="521" y="119" width="1" height="1"/>
<rect x="531" y="119" width="1" height="1"/>
<rect x="541" y="119" width="1" height="1"/>
<rect x="561" y="119" width="1" height="1"/>
<rect x="571" y="119" width="1" height="1"/>
<rect x="581" y="119" width="1" height="1"/>
<rect x="591" y="119" width="1" height="1"/>
<rect x="611" y="119" width="1" height="1"/>
<rect x="621" y="119" width="1" height="1"/>
<rect x="631" y="119" width="1" height="1"/>
<rect x="641" y="119" width="1" height="1"/>
<rect x="661" y="119" width="1" height="1"/>
<rect x="671" y="119" width="1" height="1"/>
<rect x="681" y="119" width="1" height="1"/>
<rect x="691" y="119" width="1" height="1"/>
<rect x="711" y="119" width="1" height="1"/>
<rect x="721" y="119" width="1" height="1"/>
<rect x="731" y="119" width="1" height="1"/>
<rect x="741" y="119" width="1" height="1"/>
<rect x="761" y="119" width="1" height="1"/>
<rect x="771" y="119" width="1" height="1"/>
<rect x="31" y="169" width="1" height="1"/>
<rect x="41" y="169" width="1" height="1"/>
<rect x="61" y="169" width="1" height="1"/>
<rect x="71" y="169" width="1" height="1"/>
<rect x="81" y="169" width="1" height="1"/>
<rect x="91" y="169" width="1" height="1"/>
<rect x="111" y="169" width="1" height="1"/>
<rect x="121" y="169" width="1" height="1"/>
<rect x="131" y="169" width="1" height="1"/>
<rect x="141" y="169" width="1" height="1"/>
<rect x="161" y="169" width="1" height="1"/>
<rect x="171" y="169" width="1" height="1"/>
<rect x="181" y="169" width="1" height="1"/>
<rect x="191" y="169" width="1" height="1"/>
<rect x="211" y="169" width="1" height="1"/>
<rect x="221" y="169" width="1" height="1"/>
<rect x="231" y="169" width="1" height="1"/>
<rect x="241" y="169" width="1" height="1"/>
<rect x="261" y="169" width="1" height="1"/>
<rect x="271" y="169" width="1" height="1"/>
<rect x="281" y="169" width="1" height="1"/>
<rect x="291" y="169" width="1" height="1"/>
<rect x="311" y="169" width="1" height="1"/>
<rect x="321" y="169" width="1" height="1"/>
<rect x="331" y="169" width="1" height="1"/>
<rect x="341" y="169" width="1" height="1"/>
<rect x="361" y="169" width="1" height="1"/>
<rect x="371" y="169" width="1" height="1"/>
<rect x="381" y="169" width="1" height="1"/>
<rect x="391" y="169" width="1" height="1"/>
<rect x="411" y="169" width="1" height="1"/>
<rect x="421" y="169" width="1" height="1"/>
<rect x="431" y="169" width="1" height="1"/>
<rect x="441" y="169" width="1" height="1"/>
<rect x="461" y="169" width="1" height="1"/>
<rect x="471" y="169" width="1" height="1"/>
<rect x="481" y="169" width="1" height="1"/>
<rect x="491" y="169" width="1" height="1"/>
<rect x="511" y="169" width="1" height="1"/>
<rect x="521" y="169" width="1" height="1"/>
<rect x="531" y="169" width="1" height="1"/>
<rect x="541" y="169" width="1" height="1"/>
<rect x="561" y="169" width="1" height="1"/>
<rect x="571" y="169" width="1" height="1"/>
<rect x="581" y="169" width="1" height="1"/>
<rect x="591" y="169" width="1" height="1"/>
<rect x="611" y="169" width="1" height="1"/>
<rect x="621" y="169" width="1" height="1"/>
<rect x="631" y="169" width="1" height="1"/>
<rect x="641" y="169" width="1" height="1"/>
<rect x="661" y="169" width="1" height="1"/>
<rect x="671" y="169" width="1" height="1"/>
<rect x="681" y="169" width="1" height="1"/>
<rect x="691" y="169" width="1" height="1"/>
<rect x="711" y="169" width="1" height="1"/>
<rect x="721" y="169" width="1" height="1"/>
<rect x="731" y="169" width="1" height="1"/>
<rect x="741" y="169" width="1" height="1"/>
<rect x="761" y="169" width="1" height="1"/>
<rect x="771" y="169" width="1" height="1"/>
<rect x="31" y="219" width="1" height="1"/>
<rect x="41" y="219" width="1" height="1"/>
<rect x="61" y="219" width="1" height="1"/>
<rect x="71" y="219" width="1" height="1"/>
<rect x="81" y="219" width="1" height="1"/>
<rect x="91" y="219" width="1" height="1"/>
<rect x="111" y="219" width="1" height="1"/>
<rect x="121" y="219" width="1" height="1"/>
<rect x="131" y="219" width="1" height="1"/>
<rect x="141" y="219" width="1" height="1"/>
<rect x="161" y="219" width="1" height="1"/>
<rect x="171" y="219" width="1" height="1"/>
<rect x="181" y="219" width="1" height="1"/>
<rect x="191" y="219" width="1" height="1"/>
<rect x="211" y="219" width="1" height="1"/>
<rect x="221" y="219" width="1" height="1"/>
<rect x="231" y="219" width="1" height="1"/>
<rect x="241" y="219" width="1" height="1"/>
<rect x="261" y="219" width="1" height="1"/>
<rect x="271" y="219" width="1" height="1"/>
<rect x="281" y="219" width="1" height="1"/>
<rect x="291" y="219" width="1" height="1"/>
<rect x="311" y="219" width="1" height="1"/>
<rect x="321" y="219" width="1" height="1"/>
<rect x="331" y="219" width="1" height="1"/>
<rect x="341" y="219" width="1" height="1"/>
<rect x="361" y="219" width="1" height="1"/>
<rect x="371" y="219" width="1" height="1"/>
<rect x="381" y="219" width="1" height="1"/>
<rect x="391" y="219" width="1" height="1"/>
<rect x="411" y="219" width="1" height="1"/>
<rect x="421" y="219" width="1" height="1"/>
<rect x="431" y="219" width="1" height="1"/>
<rect x="441" y="219" width="1" height="1"/>
<rect x="461" y="219" width="1" height="1"/>
<rect x="471" y="219" width="1" height="1"/>
<rect x="481" y="219" width="1" height="1"/>
<rect x="491" y="219" width="1" height="1"/>
<rect x="511" y="219" width="1" height="1"/>
<rect x="521" y="219" width="1" height="1"/>
<rect x="531" y="219" width="1" height="1"/>
<rect x="541" y="219" width="1" height="1"/>
<rect x="561" y="219" width="1" height="1"/>
<rect x="571" y="219" width="1" height="1"/>
<rect x="581" y="219" width="1" height="1"/>
<rect x="591" y="219" width="1" height="1"/>
<rect x="611" y="219" width="1" height="1"/>
<rect x="621" y="219" width="1" height="1"/>
<rect x="631" y="219" width="1" height="1"/>
<rect x="641" y="219" width="1" height="1"/>
<rect x="661" y="219" width="1" height="1"/>
<rect x="671" y="219" width="1" height="1"/>
<rect x="681" y="219" width="1" height="1"/>
<rect x="691" y="219" width="1" height="1"/>
<rect x="711" y="219" width="1" height="1"/>
<rect x="721" y="219" width="1" height="1"/>
<rect x="731" y="219" width="1" height="1"/>
<rect x="741" y="219" width="1" height="1"/>
<rect x="761" y="219" width="1" height="1"/>
<rect x="771" y="219" width="1" height="1"/>
<rect x="31" y="319" width="1" height="1"/>
<rect x="41" y="319" width="1" height="1"/>
<rect x="61" y="319" width="1" height="1"/>
<rect x="71" y="319" width="1" height="1"/>
<rect x="81" y="319" width="1" height="1"/>
<rect x="91" y="319" width="1" height="1"/>
<rect x="111" y="319" width="1" height="1"/>
<rect x="121" y="319" width="1" height="1"/>
<rect x="131" y="319" width="1" height="1"/>
<rect x="141" y="319" width="1" height="1"/>
<rect x="161" y="319" width="1" height="1"/>
<rect x="171" y="319" width="1" height="1"/>
<rect x="181" y="319" width="1" height="1"/>
<rect x="191" y="319" width="1" height="1"/>
<rect x="211" y="319" width="1" height="1"/>
<rect x="221" y="319" width="1" height="1"/>
<rect x="231" y="319" width="1" height="1"/>
<rect x="241" y="319" width="1" height="1"/>
<rect x="261" y="319" width="1" height="1"/>
<rect x="271" y="319" width="1" height="1"/>
<rect x="281" y="319" width="1" height="1"/>
<rect x="291" y="319" width="1" height="1"/>
<rect x="311" y="319" width="1" height="1"/>
<rect x="321" y="319" width="1" height="1"/>
<rect x="331" y="319" width="1" height="1"/>
<rect x="341" y="319" width="1" height="1"/>
<rect x="361" y="319" width="1" height="1"/>
<rect x="371" y="319" width="1" height="1"/>
<rect x="381" y="319" width="1" height="1"/>
<rect x="391" y="319" width="1" height="1"/>
<rect x="411" y="319" width="1" height="1"/>
<rect x="421" y="319" width="1" height="1"/>
<rect x="431" y="319" width="1" height="1"/>
<rect x="441" y="319" width="1" height="1"/>
<rect x="461" y="319" width="1" height="1"/>
<rect x="471" y="319" width="1" height="1"/>
<rect x="481" y="319" width="1" height="1"/>
<rect x="491" y="319" width="1" height="1"/>
<rect x="511" y="319" width="1" height="1"/>
<rect x="521" y="319" width="1" height="1"/>
<rect x="531" y="319" width="1" height="1"/>
<rect x="541" y="319" width="1" height="1"/>
<rect x="561" y="319" width="1" height="1"/>
<rect x="571" y="319" width="1" height="1"/>
<rect x="581" y="319" width="1" height="1"/>
<rect x="591" y="319" width="1" height="1"/>
<rect x="611" y="319" width="1" height="1"/>
<rect x="621" y="319" width="1" height="1"/>
<rect x="631" y="319" width="1" height="1"/>
<rect x="641" y="319" width="1" height="1"/>
<rect x="661" y="319" width="1" height="1"/>
<rect x="671" y="319" width="1" height="1"/>
<rect x="681" y="319" width="1" height="1"/>
<rect x="691" y="319" width="1" height="1"/>
<rect x="711" y="319" width="1" height="1"/>
<rect x="721" y="319" width="1" height="1"/>
<rect x="731" y="319" width="1" height="1"/>
<rect x="741" y="319" width="1" height="1"/>
<rect x="761" y="319" width="1" height="1"/>
<rect x="771" y="319" width="1" height="1"/>
<rect x="31" y="369" width="1" height="1"/>
<rect x="41" y="369" width="1" height="1"/>
<rect x="61" y="369" width="1" height="1"/>
<rect x="71" y="369" width="1" height="1"/>
<rect x="81" y="369" width="1" height="1"/>
<rect x="91" y="369" width="1" height="1"/>
<rect x="111" y="369" width="1" height="1"/>
<rect x="121" y="369" width="1" height="1"/>
<rect x="131" y="369" width="1" height="1"/>
<rect x="141" y="369" width="1" height="1"/>
<rect x="161" y="369" width="1" height="1"/>
<rect x="171" y="369" width="1" height="1"/>
<rect x="181" y="369" width="1" height="1"/>
<rect x="191" y="369" width="1" height="1"/>
<rect x="211" y="369" width="1" height="1"/>
<rect x="221" y="369" width="1" height="1"/>
<rect x="231" y="369" width="1" height="1"/>
<rect x="241" y="369" width="1" height="1"/>
<rect x="261" y="369" width="1" height="1"/>
<rect x="271" y="369" width="1" height="1"/>
<rect x="281" y="369" width="1" height="1"/>
<rect x="291" y="369" width="1" height="1"/>
<rect x="311" y="369" width="1" height="1"/>
<rect x="321" y="369" width="1" height="1"/>
<rect x="331" y="369" width="1" height="1"/>
<rect x="341" y="369" width="1" height="1"/>
<rect x="361" y="369" width="1" height="1"/>
<rect x="371" y="369" width="1" height="1"/>
<rect x="381" y="369" width="1" height="1"/>
<rect x="391" y="369" width="1" height="1"/>
<rect x="411" y="369" width="1" height="1"/>
<rect x="421" y="369" width="1" height="1"/>
<rect x="431" y="369" width="1" height="1"/>
<rect x="441" y="369" width="1" height="1"/>
<rect x="461" y="369" width="1" height="1"/>
<rect x="471" y="369" width="1" height="1"/>
<rect x="481" y="369" width="1" height="1"/>
<rect x="491" y="369" width="1" height="1"/>
<rect x="511" y="369" width="1" height="1"/>
<rect x="521" y="369" width="1" height="1"/>
<rect x="531" y="369" width="1" height="1"/>
<rect x="541" y="369" width="1" height="1"/>
<rect x="561" y="369" width="1" height="1"/>
<rect x="571" y="369" width="1" height="1"/>
<rect x="581" y="369" width="1" height="1"/>
<rect x="591" y="369" width="1" height="1"/>
<rect x="611" y="369" width="1" height="1"/>
<rect x="621" y="369" width="1" height="1"/>
<rect x="631" y="369" width="1" height="1"/>
<rect x="641" y="369" width="1" height="1"/>
<rect x="661" y="369" width="1" height="1"/>
<rect x="671" y="369" width="1" height="1"/>
<rect x="681" y="369" width="1" height="1"/>
<rect x="691" y="369" width="1" height="1"/>
<rect x="711" y="369" width="1" height="1"/>
<rect x="721" y="369" width="1" height="1"/>
<rect x="731" y="369" width="1" height="1"/>
<rect x="741" y="369" width="1" height="1"/>
<rect x="761" y="369" width="1" height="1"/>
<rect x="771" y="369" width="1" height="1"/>
<rect x="31" y="419" width="1" height="1"/>
<rect x="41" y="419" width="1" height="1"/>
<rect x="61" y="419" width="1" height="1"/>
<rect x="71" y="419" width="1" height="1"/>
<rect x="81" y="419" width="1" height="1"/>
<rect x="91" y="419" width="1" height="1"/>
<rect x="111" y="419" width="1" height="1"/>
<rect x="121" y="419" width="1" height="1"/>
<rect x="131" y="419" width="1" height="1"/>
<rect x="141" y="419" width="1" height="1"/>
<rect x="161" y="419" width="1" height="1"/>
<rect x="171" y="419" width="1" height="1"/>
<rect x="181" y="419" width="1" height="1"/>
<rect x="191" y="419" width="1" height="1"/>
<rect x="211" y="419" width="1" height="1"/>
<rect x="221" y="419" width="1" height="1"/>
<rect x="231" y="419" width="1" height="1"/>
<rect x="241" y="419" width="1" height="1"/>
<rect x="261" y="419" width="1" height="1"/>
<rect x="271" y="419" width="1" height="1"/>
<rect x="281" y="419" width="1" height="1"/>
<rect x="291" y="419" width="1" height="1"/>
<rect x="311" y="419" width="1" height="1"/>
<rect x="321" y="419" width="1" height="1"/>
<rect x="331" y="419" width="1" height="1"/>
<rect x="341" y="419" width="1" height="1"/>
<rect x="361" y="419" width="1" height="1"/>
<rect x="371" y="419" width="1" height="1"/>
<rect x="381" y="419" width="1" height="1"/>
<rect x="391" y="419" width="1" height="1"/>
<rect x="411" y="419" width="1" height="1"/>
<rect x="421" y="419" width="1" height="1"/>
<rect x="431" y="419" width="1" height="1"/>
<rect x="441" y="419" width="1" height="1"/>
<rect x="461" y="419" width="1" height="1"/>
<rect x="471" y="419" width="1" height="1"/>
<rect x="481" y="419" width="1" height="1"/>
<rect x="491" y="419" width="1" height="1"/>
<rect x="511" y="419" width="1" height="1"/>
<rect x="521" y="419" width="1" height="1"/>
<rect x="531" y="419" width="1" height="1"/>
<rect x="541" y="419" width="1" height="1"/>
<rect x="561" y="419" width="1" height="1"/>
<rect x="571" y="419" width="1" height="1"/>
<rect x="581" y="419" width="1" height="1"/>
<rect x="591" y="419" width="1" height="1"/>
<rect x="611" y="419" width="1" height="1"/>
<rect x="621" y="419" width="1" height="1"/>
<rect x="631" y="419" width="1" height="1"/>
<rect x="641" y="419" width="1" height="1"/>
<rect x="661" y="419" width="1" height="1"/>
<rect x="671" y="419" width="1" height="1"/>
<rect x="681" y="419" width="1" height="1"/>
<rect x="691" y="419" width="1" height="1"/>
<rect x="711" y="419" width="1" height="1"/>
<rect x="721" y="419" width="1" height="1"/>
<rect x="731" y="419" width="1" height="1"/>
<rect x="741" y="419" width="1" height="1"/>
<rect x="761" y="419" width="1" height="1"/>
<rect x="771" y="419" width="1" height="1"/>
<rect x="31" y="469" width="1" height="1"/>
<rect x="41" y="469" width="1" height="1"/>
<rect x="61" y="469" width="1" height="1"/>
<rect x="71" y="469" width="1" height="1"/>
<rect x="81" y="469" width="1" height="1"/>
<rect x="91" y="469" width="1" height="1"/>
<rect x="111" y="469" width="1" height="1"/>
<rect x="121" y="469" width="1" height="1"/>
<rect x="131" y="469" width="1" height="1"/>
<rect x="141" y="469" width="1" height="1"/>
<rect x="161" y="469" width="1" height="1"/>
<rect x="171" y="469" width="1" height="1"/>
<rect x="181" y="469" width="1" height="1"/>
<rect x="191" y="469" width="1" height="1"/>
<rect x="211" y="469" width="1" height="1"/>
<rect x="221" y="469" width="1" height="1"/>
<rect x="231" y="469" width="1" height="1"/>
<rect x="241" y="469" width="1" height="1"/>
<rect x="261" y="469" width="1" height="1"/>
<rect x="271" y="469" width="1" height="1"/>
<rect x="281" y="469" width="1" height="1"/>
<rect x="291" y="469" width="1" height="1"/>
<rect x="311" y="469" width="1" height="1"/>
<rect x="321" y="469" width="1" height="1"/>
<rect x="331" y="469" width="1" height="1"/>
<rect x="341" y="469" width="1" height="1"/>
<rect x="361" y="469" width="1" height="1"/>
<rect x="371" y="469" width="1" height="1"/>
<rect x="381" y="469" width="1" height="1"/>
<rect x="391" y="469" width="1" height="1"/>
<rect x="411" y="469" width="1" height="1"/>
<rect x="421" y="469" width="1" height="1"/>
<rect x="431" y="469" width="1" height="1"/>
<rect x="441" y="469" width="1" height="1"/>
<rect x="461" y="469" width="1" height="1"/>
<rect x="471" y="469" width="1" height="1"/>
<rect x="481" y="469" width="1" height="1"/>
<rect x="491" y="469" width="1" height="1"/>
<rect x="511" y="469" width="1" height="1"/>
<rect x="521" y="469" width="1" height="1"/>
<rect x="531" y="469" width="1" height="1"/>
<rect x="541" y="469" width="1" height="1"/>
<rect x="561" y="469" width="1" height="1"/>
<rect x="571" y="469" width="1" height="1"/>
<rect x="581" y="469" width="1" height="1"/>
<rect x="591" y="469" width="1" height="1"/>
<rect x="611" y="469" width="1" height="1"/>
<rect x="621" y="469" width="1" height="1"/>
<rect x="631" y="469" width="1" height="1"/>
<rect x="641" y="469" width="1" height="1"/>
<rect x="661" y="469" width="1" height="1"/>
<rect x="671" y="469" width="1" height="1"/>
<rect x="681" y="469" width="1" height="1"/>
<rect x="691" y="469" width="1" height="1"/>
<rect x="711" y="469" width="1" height="1"/>
<rect x="721" y="469" width="1" height="1"/>
<rect x="731" y="469" width="1" height="1"/>
<rect x="741" y="469" width="1" height="1"/>
<rect x="761" y="469" width="1" height="1"/>
<rect x="771" y="469" width="1" height="1"/>
<rect x="400" y="29" width="3" height="1"/>
<rect x="400" y="39" width="3" height="1"/>
<rect x="400" y="49" width="3" height="1"/>
<rect x="400" y="59" width="3" height="1"/>
<rect x="400" y="69" width="3" height="1"/>
<rect x="400" y="79" width="3" height="1"/>
<rect x="400" y="89" width="3" height="1"/>
<rect x="400" y="99" width="3" height="1"/>
<rect x="400" y="109" width="3" height="1"/>
<rect x="400" y="119" width="3" height="1"/>
<rect x="400" y="129" width="3" height="1"/>
<rect x="400" y="139" width="3" height="1"/>
<rect x="400" y="149" width="3" height="1"/>
<rect x="400" y="159" width="3" height="1"/>
<rect x="400" y="169" width="3" height="1"/>
<rect x="400" y="179" width="3" height="1"/>
<rect x="400" y="189" width="3" height="1"/>
<rect x="400" y="199" width="3" height="1"/>
<rect x="400" y="209" width="3" height="1"/>
<rect x="400" y="219" width="3" height="1"/>
<rect x="400" y="229" width="3" height="1"/>
<rect x="400" y="239" width="3" height="1"/>
<rect x="400" y="249" width="3" height="1"/>
<rect x="400" y="259" width="3" height="1"/>
<rect x="400" y="269" width="3" height="1"/>
<rect x="400" y="279" width="3" height="1"/>
<rect x="400" y="289" width="3" height="1"/>
<rect x="400" y="299" width="3" height="1"/>
<rect x="400" y="309" width="3" height="1"/>
<rect x="400" y="319" width="3" height="1"/>
<rect x="400" y="329" width="3" height="1"/>
<rect x="400" y="339" width="3" height="1"/>
<rect x="400" y="349" width="3" height="1"/>
<rect x="400" y="359" width="3" height="1"/>
<rect x="400" y="369" width="3" height="1"/>
<rect x="400" y="379" width="3" height="1"/>
<rect x="400" y="389" width="3" height="1"/>
<rect x="400" y="399" width="3" height="1"/>
<rect x="400" y="409" width="3" height="1"/>
<rect x="400" y="419" width="3" height="1"/>
<rect x="400" y="429" width="3" height="1"/>
<rect x="400" y="439" width="3" height="1"/>
<rect x="400" y="449" width="3" height="1"/>
<rect x="400" y="459" width="3" height="1"/>
<rect x="400" y="469" width="3" height="1"/>
<rect x="400" y="479" width="3" height="1"/>
<rect x="400" y="489" width="3" height="1"/>
<rect x="400" y="499" width="3" height="1"/>
<rect x="400" y="509" width="3" height="1"/>
<rect x="31" y="268" width="1" height="3"/>
<rect x="41" y="268" width="1" height="3"/>
<rect x="51" y="268" width="1" height="3"/>
<rect x="61" y="268" width="1" height="3"/>
<rect x="71" y="268" width="1" height="3"/>
<rect x="81" y="268" width="1" height="3"/>
<rect x="91" y="268" width="1" height="3"/>
<rect x="101" y="268" width="1" height="3"/>
<rect x="111" y="268" width="1" height="3"/>
<rect x="121" y="268" width="1" height="3"/>
<rect x="131" y="268" width="1" height="3"/>
<rect x="141" y="268" width="1" height="3"/>
<rect x="151" y="268" width="1" height="3"/>
<rect x="161" y="268" width="1" height="3"/>
<rect x="171" y="268" width="1" height="3"/>
<rect x="181" y="268" width="1" height="3"/>
<rect x="191" y="268" width="1" height="3"/>
<rect x="201" y="268" width="1" height="3"/>
<rect x="211" y="268" width="1" height="3"/>
<rect x="221" y="268" width="1" height="3"/>
<rect x="231" y="268" width="1" height="3"/>
<rect x="241" y="268" width="1" height="3"/>
<rect x="251" y="268" width="1" height="3"/>
<rect x="261" y="268" width="1" height="3"/>
<rect x="271" y="268" width="1" height="3"/>
<rect x="281" y="268" width="1" height="3"/>
<rect x="291" y="268" width="1" height="3"/>
<rect x="301" y="268" width="1" height="3"/>
<rect x="311" y="268" width="1" height="3"/>
<rect x="321" y="268" width="1" height="3"/>
<rect x="331" y="268" width="1" height="3"/>
<rect x="341" y="268" width="1" height="3"/>
<rect x="351" y="268" width="1" height="3"/>
<rect x="361" y="268" width="1" height="3"/>
<rect x="371" y="268" width="1" height="3"/>
<rect x="381" y="268" width="1" height="3"/>
<rect x="391" y="268" width="1" height="3"/>
<rect x="401" y="268" width="1" height="3"/>
<rect x="411" y="268" width="1" height="3"/>
<rect x="421" y="268" width="1" height="3"/>
<rect x="431" y="268" width="1" height="3"/>
<rect x="441" y="268" width="1" height="3"/>
<rect x="451" y="268" width="1" height="3"/>
<rect x="461" y="268" width="1" height="3"/>
<rect x="471" y="268" width="1" height="3"/>
<rect x="481" y="268" width="1" height="3"/>
<rect x="491" y="268" width="1" height="3"/>
<rect x="501" y="268" width="1" height="3"/>
<rect x="511" y="268" width="1" height="3"/>
<rect x="521" y="268" width="1" height="3"/>
<rect x="531" y="268" width="1" height="3"/>
<rect x="541" y="268" width="1" height="3"/>
<rect x="551" y="268" width="1" height="3"/>
<rect x="561" y="268" width="1" height="3"/>
<rect x="571" y="268" width="1" height="3"/>
<rect x="581" y="268" width="1" height="3"/>
<rect x="591" y="268" width="1" height="3"/>
<rect x="601" y="268" width="1" height="3"/>
<rect x="611" y="268" width="1" height="3"/>
<rect x="621" y="268" width="1" height="3"/>
<rect x="631" y="268" width="1" height="3"/>
<rect x="641" y="268" width="1" height="3"/>
<rect x="651" y="268" width="1" height="3"/>
<rect x="661" y="268" width="1" height="3"/>
<rect x="671" y="268" width="1" height="3"/>
<rect x="681" y="268" width="1" height="3"/>
<rect x="691" y="268" width="1" height="3"/>
<rect x="701" y="268" width="1" height="3"/>
<rect x="711" y="268" width="1" height="3"/>
<rect x="721" y="268" width="1" height="3"/>
<rect x="731" y="268" width="1" height="3"/>
<rect x="741" y="268" width="1" height="3"/>
<rect x="751" y="268" width="1" height="3"/>
<rect x="761" y="268" width="1" height="3"/>
<rect x="771" y="268" width="1" height="3"/>
<rect x="31" y="21" width="1" height="2"/>
<rect x="31" y="515" width="1" height="2"/>
<rect x="41" y="21" width="1" height="2"/>
<rect x="41" y="515" width="1" height="2"/>
<rect x="51" y="21" width="1" height="5"/>
<rect x="51" y="512" width="1" height="5"/>
<rect x="61" y="21" width="1" height="2"/>
<rect x="61" y="515" width="1" height="2"/>
<rect x="71" y="21" width="1" height="2"/>
<rect x="71" y="515" width="1" height="2"/>
<rect x="81" y="21" width="1" height="2"/>
<rect x="81" y="515" width="1" height="2"/>
<rect x="91" y="21" width="1" height="2"/>
<rect x="91" y="515" width="1" height="2"/>
<rect x="101" y="21" width="1" height="5"/>
<rect x="101" y="512" width="1" height="5"/>
<rect x="111" y="21" width="1" height="2"/>
<rect x="111" y="515" width="1" height="2"/>
<rect x="121" y="21" width="1" height="2"/>
<rect x="121" y="515" width="1" height="2"/>
<rect x="131" y="21" width="1" height="2"/>
<rect x="131" y="515" width="1" height="2"/>
<rect x="141" y="21" width="1" height="2"/>
<rect x="141" y="515" width="1" height="2"/>
<rect x="151" y="21" width="1" height="5"/>
<rect x="151" y="512" width="1" height="5"/>
<rect x="161" y="21" width="1" height="2"/>
<rect x="161" y="515" width="1" height="2"/>
<rect x="171" y="21" width="1" height="2"/>
<rect x="171" y="515" width="1" height="2"/>
<rect x="181" y="21" width="1" height="2"/>
<rect x="181" y="515" width="1" height="2"/>
<rect x="191" y="21" width="1" height="2"/>
<rect x="191" y="515" width="1" height="2"/>
<rect x="201" y="21" width="1" height="5"/>
<rect x="201" y="512" width="1" height="5"/>
<rect x="211" y="21" width="1" height="2"/>
<rect x="211" y="515" width="1" height="2"/>
<rect x="221" y="21" width="1" height="2"/>
<rect x="221" y="515" width="1" height="2"/>
<rect x="231" y="21" width="1" height="2"/>
<rect x="231" y="515" width="1" height="2"/>
<rect x="241" y="21" width="1" height="2"/>
<rect x="241" y="515" width="1" height="2"/>
<rect x="251" y="21" width="1" height="5"/>
<rect x="251" y="512" width="1" height="5"/>
<rect x="261" y="21" width="1" height="2"/>
<rect x="261" y="515" width="1" height="2"/>
<rect x="271" y="21" width="1" height="2"/>
<rect x="271" y="515" width="1" height="2"/>
<rect x="281" y="21" width="1" height="2"/>
<rect x="281" y="515" width="1" height="2"/>
<rect x="291" y="21" width="1" height="2"/>
<rect x="291" y="515" width="1" height="2"/>
<rect x="301" y="21" width="1" height="5"/>
<rect x="301" y="512" width="1" height="5"/>
<rect x="311" y="21" width="1" height="2"/>
<rect x="311" y="515" width="1" height="2"/>
<rect x="321" y="21" width="1" height="2"/>
<rect x="321" y="515" width="1" height="2"/>
<rect x="331" y="21" width="1" height="2"/>
<rect x="331" y="515" width="1" height="2"/>
<rect x="341" y="21" width="1" height="2"/>
<rect x="341" y="515" width="1" height="2"/>
<rect x="351" y="21" width="1" height="5"/>
<rect x="351" y="512" width="1" height="5"/>
<rect x="361" y="21" width="1" height="2"/>
<rect x="361" y="515" width="1" height="2"/>
<rect x="371" y="21" width="1" height="2"/>
<rect x="371" y="515" width="1" height="2"/>
<rect x="381" y="21" width="1" height="2"/>
<rect x="381" y="515" width="1" height="2"/>
<rect x="391" y="21" width="1" height="2"/>
<rect x="391" y="515" width="1" height="2"/>
<rect x="401" y="21" width="1" height="5"/>
<rect x="401" y="512" width="1" height="5"/>
<rect x="411" y="21" width="1" height="2"/>
<rect x="411" y="515" width="1" height="2"/>
<rect x="421" y="21" width="1" height="2"/>
<rect x="421" y="515" width="1" height="2"/>
<rect x="431" y="21" width="1" height="2"/>
<rect x="431" y="515" width="1" height="2"/>
<rect x="441" y="21" width="1" height="2"/>
<rect x="441" y="515" width="1" height="2"/>
<rect x="451" y="21" width="1" height="5"/>
<rect x="451" y="512" width="1" height="5"/>
<rect x="461" y="21" width="1" height="2"/>
<rect x="461" y="515" width="1" height="2"/>
<rect x="471" y="21" width="1" height="2"/>
<rect x="471" y="515" width="1" height="2"/>
<rect x="481" y="21" width="1" height="2"/>
<rect x="481" y="515" width="1" height="2"/>
<rect x="491" y="21" width="1" height="2"/>
<rect x="491" y="515" width="1" height="2"/>
<rect x="501" y="21" width="1" height="5"/>
<rect x="501" y="512" width="1" height="5"/>
<rect x="511" y="21" width="1" height="2"/>
<rect x="511" y="515" width="1" height="2"/>
<rect x="521" y="21" width="1" height="2"/>
<rect x="521" y="515" width="1" height="2"/>
<rect x="531" y="21" width="1" height="2"/>
<rect x="531" y="515" width="1" height="2"/>
<rect x="541" y="21" width="1" height="2"/>
<rect x="541" y="515" width="1" height="2"/>
<rect x="551" y="21" width="1" height="5"/>
<rect x="551" y="512" width="1" height="5"/>
<rect x="561" y="21" width="1" height="2"/>
<rect x="561" y="515" width="1" height="2"/>
<rect x="571" y="21" width="1" height="2"/>
<rect x="571" y="515" width="1" height="2"/>
<rect x="581" y="21" width="1" height="2"/>
<rect x="581" y="515" width="1" height="2"/>
<rect x="591" y="21" width="1" height="2"/>
<rect x="591" y="515" width="1" height="2"/>
<rect x="601" y="21" width="1" height="5"/>
<rect x="601" y="512" width="1" height="5"/>
<rect x="611" y="21" width="1" height="2"/>
<rect x="611" y="515" width="1" height="2"/>
<rect x="621" y="21" width="1" height="2"/>
<rect x="621" y="515" width="1" height="2"/>
<rect x="631" y="21" width="1" height="2"/>
<rect x="631" y="515" width="1" height="2"/>
<rect x="641" y="21" width="1" height="2"/>
<rect x="641" y="515" width="1" height="2"/>
<rect x="651" y="21" width="1" height="5"/>
<rect x="651" y="512" width="1" height="5"/>
<rect x="661" y="21" width="1" height="2"/>
<rect x="661" y="515" width="1" height="2"/>
<rect x="671" y="21" width="1" height="2"/>
<rect x="671" y="515" width="1" height="2"/>
<rect x="681" y="21" width="1" height="2"/>
<rect x="681" y="515" width="1" height="2"/>
<rect x="691" y="21" width="1" height="2"/>
<rect x="691" y="515" width="1" height="2"/>
<rect x="701" y="21" width="1" height="5"/>
<rect x="701" y="512" width="1" height="5"/>
<rect x="711" y="21" width="1" height="2"/>
<rect x="711" y="515" width="1" height="2"/>
<rect x="721" y="21" width="1" height="2"/>
<rect x="721" y="515" width="1" height="2"/>
<rect x="731" y="21" width="1" height="2"/>
<rect x="731" y="515" width="1" height="2"/>
<rect x="741" y="21" width="1" height="2"/>
<rect x="741" y="515" width="1" height="2"/>
<rect x="751" y="21" width="1" height="5"/>
<rect x="751" y="512" width="1" height="5"/>
<rect x="761" y="21" width="1" height="2"/>
<rect x="761" y="515" width="1" height="2"/>
<rect x="771" y="21" width="1" height="2"/>
<rect x="771" y="515" width="1" height="2"/>
<rect x="22" y="29" width="3" height="1"/>
<rect x="775" y="29" width="3" height="1"/>
<rect x="22" y="39" width="3" height="1"/>
<rect x="775" y="39" width="3" height="1"/>
<rect x="22" y="49" width="3" height="1"/>
<rect x="775" y="49" width="3" height="1"/>
<rect x="22" y="59" width="3" height="1"/>
<rect x="775" y="59" width="3" height="1"/>
<rect x="22" y="69" width="6" height="1"/>
<rect x="772" y="69" width="6" height="1"/>
<rect x="22" y="79" width="3" height="1"/>
<rect x="775" y="79" width="3" height="1"/>
<rect x="22" y="89" width="3" height="1"/>
<rect x="775" y="89" width="3" height="1"/>
<rect x="22" y="99" width="3" height="1"/>
<rect x="775" y="99" width="3" height="1"/>
<rect x="22" y="109" width="3" height="1"/>
<rect x="775" y="109" width="3" height="1"/>
<rect x="22" y="119" width="6" height="1"/>
<rect x="772" y="119" width="6" height="1"/>
<rect x="22" y="129" width="3" height="1"/>
<rect x="775" y="129" width="3" height="1"/>
<rect x="22" y="139" width="3" height="1"/>
<rect x="775" y="139" width="3" height="1"/>
<rect x="22" y="149" width="3" height="1"/>
<rect x="775" y="149" width="3" height="1"/>
<rect x="22" y="159" width="3" height="1"/>
<rect x="775" y="159" width="3" height="1"/>
<rect x="22" y="169" width="6" height="1"/>
<rect x="772" y="169" width="6" height="1"/>
<rect x="22" y="179" width="3" height="1"/>
<rect x="775" y="179" width="3" height="1"/>
<rect x="22" y="189" width="3" height="1"/>
<rect x="775" y="189" width="3" height="1"/>
<rect x="22" y="199" width="3" height="1"/>
<rect x="775" y="199" width="3" height="1"/>
<rect x="22" y="209" width="3" height="1"/>
<rect x="775" y="209" width="3" height="1"/>
<rect x="22" y="219" width="6" height="1"/>
<rect x="772" y="219" width="6" height="1"/>
<rect x="22" y="229" width="3" height="1"/>
<rect x="775" y="229" width="3" height="1"/>
<rect x="22" y="239" width="3" height="1"/>
<rect x="775" y="239" width="3" height="1"/>
<rect x="22" y="249" width="3" height="1"/>
<rect x="775" y="249" width="3" height="1"/>
<rect x="22" y="259" width="3" height="1"/>
<rect x="775" y="259" width="3" height="1"/>
<rect x="22" y="269" width="6" height="1"/>
<rect x="772" y="269" width="6" height="1"/>
<rect x="22" y="279" width="3" height="1"/>
<rect x="775" y="279" width="3" height="1"/>
<rect x="22" y="289" width="3" height="1"/>
<rect x="775" y="289" width="3" height="1"/>
<rect x="22" y="299" width="3" height="1"/>
<rect x="775" y="299" width="3" height="1"/>
<rect x="22" y="309" width="3" height="1"/>
<rect x="775" y="309" width="3" height="1"/>
<rect x="22" y="319" width="6" height="1"/>
<rect x="772" y="319" width="6" height="1"/>
<rect x="22" y="329" width="3" height="1"/>
<rect x="775" y="329" width="3" height="1"/>
<rect x="22" y="339" width="3" height="1"/>
<rect x="775" y="339" width="3" height="1"/>
<rect x="22" y="349" width="3" height="1"/>
<rect x="775" y="349" width="3" height="1"/>
<rect x="22" y="359" width="3" height="1"/>
<rect x="775" y="359" width="3" height="1"/>
<rect x="22" y="369" width="6" height="1"/>
<rect x="772" y="369" width="6" height="1"/>
<rect x="22" y="379" width="3" height="1"/>
<rect x="775" y="379" width="3" height="1"/>
<rect x="22" y="389" width="3" height="1"/>
<rect x="775" y="389" width="3" height="1"/>
<rect x="22" y="399" width="3" height="1"/>
<rect x="775" y="399" width="3" height="1"/>
<rect x="22" y="409" width="3" height="1"/>
<rect x="775" y="409" width="3" height="1"/>
<rect x="22" y="419" width="6" height="1"/>
<rect x="772" y="419" width="6" height="1"/>
<rect x="22" y="429" width="3" height="1"/>
<rect x="775" y="429" width="3" height="1"/>
<rect x="22" y="439" width="3" height="1"/>
<rect x="775" y="439" width="3" height="1"/>
<rect x="22" y="449" width="3" height="1"/>
<rect x="775" y="449" width="3" height="1"/>
<rect x="22" y="459" width="3" height="1"/>
<rect x="775" y="459" width="3" height="1"/>
<rect x="22" y="469" width="6" height="1"/>
<rect x="772" y="469" width="6" height="1"/>
<rect x="22" y="479" width="3" height="1"/>
<rect x="775" y="479" width="3" height="1"/>
<rect x="22" y="489" width="3" height="1"/>
<rect x="775" y="489" width="3" height="1"/>
<rect x="22" y="499" width="3" height="1"/>
<rect x="775" y="499" width="3" height="1"/>
<rect x="22" y="509" width="3" height="1"/>
<rect x="775" y="509" width="3" height="1"/>
</g>

<!-- ch2 yellow -->
<g fill="#e0e000" shape-rendering="crispEdges"><rect x="22" y="467" width="755" height="4"/><rect x="35" y="471" width="1" height="2"/><rect x="63" y="471" width="1" height="2"/><rect x="70" y="471" width="1" height="2"/><rect x="83" y="471" width="1" height="2"/><rect x="160" y="471" width="1" height="2"/><rect x="199" y="471" width="1" height="2"/><rect x="202" y="471" width="1" height="2"/><rect x="213" y="471" width="1" height="2"/><rect x="229" y="471" width="1" height="2"/><rect x="231" y="471" width="1" height="2"/><rect x="246" y="471" width="1" height="2"/><rect x="249" y="471" width="1" height="2"/><rect x="285" y="471" width="1" height="2"/><rect x="318" y="471" width="1" height="2"/><rect x="336" y="471" width="1" height="2"/><rect x="342" y="471" width="1" height="2"/><rect x="344" y="471" width="1" height="2"/><rect x="365" y="471" width="1" height="2"/><rect x="383" y="471" width="1" height="2"/><rect x="393" y="471" width="1" height="2"/><rect x="405" y="471" width="1" height="2"/><rect x="413" y="471" width="1" height="2"/><rect x="420" y="471" width="1" height="2"/><rect x="427" y="471" width="1" height="2"/><rect x="450" y="471" width="1" height="2"/><rect x="456" y="471" width="1" height="2"/><rect x="461" y="471" width="1" height="2"/><rect x="490" y="471" width="1" height="2"/><rect x="503" y="471" width="1" height="2"/><rect x="522" y="471" width="1" height="2"/><rect x="525" y="471" width="1" height="2"/><rect x="569" y="471" width="1" height="2"/><rect x="595" y="471" width="1" height="2"/><rect x="598" y="471" width="1" height="2"/><rect x="614" y="471" width="1" height="2"/><rect x="629" y="471" width="1" height="2"/><rect x="637" y="471" width="1" height="2"/><rect x="643" y="471" width="1" height="2"/><rect x="659" y="471" width="1" height="2"/><rect x="687" y="471" width="1" height="2"/><rect x="693" y="471" width="1" height="2"/><rect x="708" y="471" width="1" height="2"/><rect x="713" y="471" width="1" height="2"/><rect x="725" y="471" width="1" height="2"/><rect x="738" y="471" width="1" height="2"/><rect x="751" y="471" width="1" height="2"/></g>

<!-- ch1 waveform -->
<path d="M22.5 256.5V280.5M23.5 256.5V281.5M24.5 256.5V280.5M25.5 255.5V279.0M26.5 255.5V277.8M27.5 255.5V276.5M28.5 256.5V275.0M29.5 259.0V273.5M30.5 262.0V273.3M31.5 262.2V273.2M32.5 262.5V274.0M33.5 260.0V275.0M34.5 258.0V276.8M35.5 256.5V278.5M36.5 256.5V280.5M37.5 256.4V280.5M38.5 256.4V281.6M39.5 255.4V280.6M40.5 256.3V280.6M41.5 256.3V280.7M42.5 256.3V280.7M43.5 256.2V280.8M44.5 256.2V280.8M45.5 256.2V280.8M46.5 256.1V280.9M47.5 256.1V280.9M48.5 256.1V280.9M49.5 256.0V281.0M50.5 255.0V281.0M51.5 255.9V281.0M52.5 255.9V281.0M53.5 255.8V280.9M54.5 255.7V280.9M55.5 255.7V280.9M56.5 255.6V280.9M57.5 254.5V280.9M58.5 255.4V280.8M59.5 255.4V280.8M60.5 255.3V280.8M61.5 254.2V280.8M62.5 255.2V280.8M63.5 254.1V280.7M64.5 255.0V280.7M65.5 254.9V280.7M66.5 254.9V280.7M67.5 254.8V280.7M68.5 254.7V280.6M69.5 254.7V280.6M70.5 254.6V280.6M71.5 254.5V280.6M72.5 254.5V280.6M73.5 254.4V280.5M74.5 254.3V280.5M75.5 253.2V280.5M76.5 254.2V280.5M77.5 254.1V280.5M78.5 254.0V280.4M79.5 254.0V281.4M80.5 253.9V280.4M81.5 253.8V280.4M82.5 253.8V280.4M83.5 253.7V280.3M84.5 252.6V281.3M85.5 253.6V280.3M86.5 253.5V281.3M87.5 252.4V280.3M88.5 253.3V280.2M89.5 252.3V280.2M90.5 253.2V280.2M91.5 253.1V280.2M92.5 253.1V280.2M93.5 253.0V280.1M94.5 252.9V280.1M95.5 252.8V280.1M96.5 252.8V280.1M97.5 252.7V280.1M98.5 251.6V280.0M99.5 252.6V280.0M100.5 252.5V281.0M101.5 252.4V279.9M102.5 252.3V279.9M103.5 252.2V279.9M104.5 252.2V279.8M105.5 252.1V279.8M106.5 252.0V279.7M107.5 251.9V279.6M108.5 251.8V279.6M109.5 251.8V279.6M110.5 251.7V279.5M111.5 251.6V280.4M112.5 250.5V279.4M113.5 251.4V279.4M114.5 251.3V279.3M115.5 251.2V279.2M116.5 251.2V279.2M117.5 251.1V279.1M118.5 251.0V279.1M119.5 250.9V279.1M120.5 250.8V279.0M121.5 250.8V278.9M122.5 250.7V278.9M123.5 250.6V278.9M124.5 250.5V278.8M125.5 250.4V278.8M126.5 250.3V278.7M127.5 250.2V278.6M128.5 250.2V278.6M129.5 250.1V278.6M130.5 250.0V278.5M131.5 250.0V278.5M132.5 250.0V278.4M133.5 249.9V278.4M134.5 249.9V278.4M135.5 249.9V279.3M136.5 249.9V278.3M137.5 249.9V278.2M138.5 249.9V278.2M139.5 249.8V278.2M140.5 249.8V278.1M141.5 249.8V278.1M142.5 249.8V278.1M143.5 249.8V278.0M144.5 249.8V278.0M145.5 249.7V278.0M146.5 249.7V277.9M147.5 249.7V277.9M148.5 249.7V278.9M149.5 249.7V277.8M150.5 248.6V277.8M151.5 249.6V277.8M152.5 249.6V277.7M153.5 249.6V277.7M154.5 249.6V277.6M155.5 249.6V277.6M156.5 249.5V277.6M157.5 249.5V277.5M158.5 249.5V277.5M159.5 245.0V276.0M160.5 245.0V276.0M161.5 244.9V276.0M162.5 240.9V275.9M163.5 244.8V279.9M164.5 244.8V275.9M165.5 241.7V277.9M166.5 241.7V278.8M167.5 242.6V275.8M168.5 244.6V275.8M169.5 240.5V275.8M170.5 241.5V275.7M171.5 244.4V277.7M172.5 241.4V278.7M173.5 241.3V275.7M174.5 241.3V279.6M175.5 241.2V280.6M176.5 242.2V279.6M177.5 244.1V278.6M178.5 244.1V279.5M179.5 242.0V278.5M180.5 244.0V275.5M181.5 243.9V275.5M182.5 239.9V275.4M183.5 243.8V275.4M184.5 241.8V275.4M185.5 241.7V277.4M186.5 243.7V275.3M187.5 241.6V277.3M188.5 240.6V275.3M189.5 240.5V275.3M190.5 239.5V277.2M191.5 243.4V278.2M192.5 240.4V275.2M193.5 243.3V280.2M194.5 243.3V279.1M195.5 243.2V275.1M196.5 241.2V275.1M197.5 243.1V280.1M198.5 240.1V280.0M199.5 243.0V275.0M200.5 243.0V275.0M201.5 240.9V274.9M202.5 238.9V274.8M203.5 239.8V274.7M204.5 242.8V278.6M205.5 240.7V279.5M206.5 242.7V274.4M207.5 240.6V274.3M208.5 240.6V279.2M209.5 239.5V274.1M210.5 242.5V273.9M211.5 239.4V276.8M212.5 239.4V277.7M213.5 242.3V275.6M214.5 240.3V275.5M215.5 239.2V276.4M216.5 238.2V273.3M217.5 238.1V273.2M218.5 242.1V273.1M219.5 242.0V273.0M220.5 243.5V271.0M221.5 243.5V271.0M222.5 243.5V271.0M223.5 243.4V270.9M224.5 243.4V270.9M225.5 243.4V270.9M226.5 243.4V271.9M227.5 243.4V270.9M228.5 243.3V270.8M229.5 243.3V270.8M230.5 242.3V270.8M231.5 243.3V270.8M232.5 243.3V271.8M233.5 242.2V270.7M234.5 243.2V270.7M235.5 243.2V271.7M236.5 243.2V270.7M237.5 243.2V270.7M238.5 243.1V270.6M239.5 243.1V270.6M240.5 243.1V270.6M241.5 243.1V270.6M242.5 243.1V270.6M243.5 242.0V270.5M244.5 243.0V271.5M245.5 243.0V270.5M246.5 241.5V270.5M247.5 241.5V270.4M248.5 241.5V270.4M249.5 241.4V270.4M250.5 241.4V270.3M251.5 241.4V270.3M252.5 241.4V270.3M253.5 241.4V270.2M254.5 241.4V270.2M255.5 241.3V270.2M256.5 241.3V270.1M257.5 240.3V270.1M258.5 241.3V270.1M259.5 241.3V270.0M260.5 241.3V271.0M261.5 241.2V270.0M262.5 241.2V269.9M263.5 241.2V269.9M264.5 241.2V269.9M265.5 241.2V269.8M266.5 241.2V269.8M267.5 241.1V269.8M268.5 241.1V269.7M269.5 241.1V269.7M270.5 241.1V269.7M271.5 241.1V269.6M272.5 241.1V269.6M273.5 241.0V269.6M274.5 240.0V269.5M275.5 241.0V270.5M276.5 47.0V269.5M277.5 237.0V269.5M278.5 238.9V269.6M279.5 235.9V269.6M280.5 223.0V271.6M281.5 238.8V269.6M282.5 238.8V269.6M283.5 238.7V272.7M284.5 238.7V269.7M285.5 238.6V270.7M286.5 235.6V269.7M287.5 238.5V271.7M288.5 238.5V269.8M289.5 238.5V271.8M290.5 238.4V269.8M291.5 238.4V269.8M292.5 235.3V271.8M293.5 238.3V269.9M294.5 237.2V272.9M295.5 238.2V269.9M296.5 236.2V269.9M297.5 238.1V270.9M298.5 237.1V270.0M299.5 237.0V270.0M300.5 238.0V271.0M301.5 21.0V269.9M302.5 237.0V269.9M303.5 237.0V269.9M304.5 235.0V269.8M305.5 189.0V269.8M306.5 236.9V269.7M307.5 236.9V270.6M308.5 236.9V269.6M309.5 236.9V269.6M310.5 236.9V269.5M311.5 234.9V269.4M312.5 236.9V269.4M313.5 236.8V271.4M314.5 236.8V269.3M315.5 236.8V269.2M316.5 236.8V269.2M317.5 235.8V269.1M318.5 236.8V269.1M319.5 236.8V269.1M320.5 236.8V269.0M321.5 236.7V269.9M322.5 235.7V268.9M323.5 236.7V270.9M324.5 236.7V268.8M325.5 236.7V270.8M326.5 236.7V268.7M327.5 236.7V271.6M328.5 233.6V268.6M329.5 236.6V268.6M330.5 236.6V268.5M331.5 236.6V269.4M332.5 234.6V268.4M333.5 236.6V270.4M334.5 236.6V268.3M335.5 235.6V268.2M336.5 236.5V269.2M337.5 236.5V268.1M338.5 236.5V268.1M339.5 234.5V268.1M340.5 233.0V271.0M341.5 230.0V271.0M342.5 229.0V274.0M343.5 233.0V267.9M344.5 231.0V267.9M345.5 228.0V269.9M346.5 233.0V269.9M347.5 233.0V273.9M348.5 233.0V267.9M349.5 233.0V267.9M350.5 233.0V270.8M351.5 233.0V267.8M352.5 229.0V267.8M353.5 229.0V267.8M354.5 231.0V272.8M355.5 228.0V267.8M356.5 230.0V267.7M357.5 233.0V273.7M358.5 228.0V273.7M359.5 229.0V267.7M360.5 228.0V273.7M361.5 231.0V267.6M362.5 233.0V270.6M363.5 233.0V267.6M364.5 229.0V269.6M365.5 229.0V267.6M366.5 231.0V270.6M367.5 228.0V267.6M368.5 229.0V267.5M369.5 233.0V273.5M370.5 229.0V267.5M371.5 233.0V267.5M372.5 229.0V267.5M373.5 233.0V267.4M374.5 233.0V267.4M375.5 228.0V269.4M376.5 229.0V273.4M377.5 233.0V267.4M378.5 231.0V273.4M379.5 228.0V270.4M380.5 230.0V267.3M381.5 233.0V267.3M382.5 229.0V272.3M383.5 229.0V270.3M384.5 230.0V270.3M385.5 228.0V270.2M386.5 233.0V269.2M387.5 233.0V267.2M388.5 228.0V267.2M389.5 228.0V267.2M390.5 229.0V269.2M391.5 230.0V267.1M392.5 230.0V267.1M393.5 231.0V272.1M394.5 229.0V269.1M395.5 229.0V270.1M396.5 233.0V267.1M397.5 229.0V272.1M398.5 231.0V267.0M399.5 233.0V269.0M400.5 233.0V267.0M401.5 227.0V268.0M402.5 233.0V267.0M403.5 233.0V267.0M404.5 233.0V269.0M405.5 233.0V269.0M406.5 233.0V267.0M407.5 233.0V267.0M408.5 233.0V268.0M409.5 233.0V267.0M410.5 233.0V267.0M411.5 232.0V268.0M412.5 233.0V267.0M413.5 181.0V267.0M414.5 233.0V269.0M415.5 233.0V267.0M416.5 233.0V269.0M417.5 233.0V267.0M418.5 233.0V267.0M419.5 233.0V269.0M420.5 233.0V267.0M421.5 226.0V268.0M422.5 233.0V267.0M423.5 233.0V267.0M424.5 229.0V268.0M425.5 227.0V269.0M426.5 231.0V267.0M427.5 233.0V268.0M428.5 233.0V267.0M429.5 233.0V267.0M430.5 233.0V267.0M431.5 233.0V267.0M432.5 229.0V267.0M433.5 233.0V267.0M434.5 227.0V267.0M435.5 233.0V267.0M436.5 233.0V267.0M437.5 233.0V267.0M438.5 233.0V269.0M439.5 233.0V269.0M440.5 233.0V267.0M441.5 231.0V269.0M442.5 233.0V267.0M443.5 219.0V267.0M444.5 222.0V267.0M445.5 232.0V267.0M446.5 233.0V267.0M447.5 229.0V267.0M448.5 233.0V267.0M449.5 233.0V267.0M450.5 230.0V267.0M451.5 233.0V267.0M452.5 233.0V267.0M453.5 233.0V267.0M454.5 233.0V267.0M455.5 153.0V267.0M456.5 176.0V268.0M457.5 233.0V267.0M458.5 175.0V267.0M459.5 233.0V267.0M460.5 233.0V267.0M461.5 230.0V267.0M462.5 233.0V267.0M463.5 233.0V267.0M464.5 233.0V267.0M465.5 233.0V267.0M466.5 233.0V267.0M467.5 211.0V269.0M468.5 233.0V267.0M469.5 224.0V267.0M470.5 233.0V267.0M471.5 222.0V267.0M472.5 233.0V267.0M473.5 233.0V267.0M474.5 220.0V267.0M475.5 233.0V267.0M476.5 233.0V267.0M477.5 229.0V267.0M478.5 233.0V268.0M479.5 195.0V267.0M480.5 233.0V267.0M481.5 233.0V267.0M482.5 230.0V267.0M483.5 233.0V268.0M484.5 222.0V267.0M485.5 231.0V267.0M486.5 233.0V267.0M487.5 233.0V269.0M488.5 233.0V267.0M489.5 233.0V267.0M490.5 222.0V268.0M491.5 227.0V268.0M492.5 232.0V267.0M493.5 227.0V267.0M494.5 233.0V268.0M495.5 233.0V267.0M496.5 233.0V267.0M497.5 233.0V267.0M498.5 224.0V269.0M499.5 233.0V269.0M500.5 217.0V267.0M501.5 233.0V267.0M502.5 232.0V267.0M503.5 221.0V269.0M504.5 233.0V267.0M505.5 233.0V267.0M506.5 233.0V267.0M507.5 233.0V267.0M508.5 233.0V267.0M509.5 233.0V269.0M510.5 233.0V267.0M511.5 231.0V267.0M512.5 233.0V267.0M513.5 233.0V267.0M514.5 233.0V267.0M515.5 233.0V267.0M516.5 233.0V267.0M517.5 233.0V267.0M518.5 233.0V267.0M519.5 233.0V267.0M520.5 229.0V279.0M521.5 211.0V271.0M522.5 221.0V270.0M523.5 231.0V273.1M524.5 131.0V267.1M525.5 231.0V279.1M526.5 231.0V279.1M527.5 231.0V277.1M528.5 227.0V271.1M529.5 217.0V275.1M530.5 227.0V273.2M531.5 212.0V271.2M532.5 231.0V275.2M533.5 231.0V267.2M534.5 225.0V272.2M535.5 221.0V269.2M536.5 227.0V267.3M537.5 225.0V271.3M538.5 205.0V267.3M539.5 223.0V273.3M540.5 187.5V267.3M541.5 221.0V270.4M542.5 231.0V273.4M543.5 217.0V267.4M544.5 231.0V271.4M545.5 223.0V267.4M546.5 231.0V267.4M547.5 225.0V279.4M548.5 223.0V267.5M549.5 231.0V279.5M550.5 231.0V267.5M551.5 225.0V267.5M552.5 221.0V272.5M553.5 231.0V273.6M554.5 223.0V267.6M555.5 225.0V279.6M556.5 227.0V267.6M557.5 231.0V273.6M558.5 227.0V271.6M559.5 217.0V277.6M560.5 227.0V267.7M561.5 227.0V271.7M562.5 82.5V272.7M563.5 231.0V267.7M564.5 227.0V277.7M565.5 227.0V267.8M566.5 217.0V267.8M567.5 231.0V267.8M568.5 179.0V270.8M569.5 195.0V269.8M570.5 231.0V277.8M571.5 231.0V272.9M572.5 229.0V267.9M573.5 231.0V271.9M574.5 231.0V277.9M575.5 231.0V275.9M576.5 227.0V267.9M577.5 225.0V279.9M578.5 227.0V268.0M579.5 195.0V268.0M580.5 223.0V274.0M581.5 228.8V268.0M582.5 209.0V273.0M583.5 228.6V273.0M584.5 230.4V268.0M585.5 228.2V273.0M586.5 230.1V268.0M587.5 221.9V268.0M588.5 227.8V268.0M589.5 197.0V268.0M590.5 225.5V268.0M591.5 215.3V268.0M592.5 229.2V268.0M593.5 205.0V268.0M594.5 228.9V268.0M595.5 224.8V273.0M596.5 228.6V268.0M597.5 228.4V268.0M598.5 187.5V268.0M599.5 214.2V273.0M600.5 219.4V272.0M601.5 219.3V270.0M602.5 217.6V270.0M603.5 220.7V268.0M604.5 224.1V268.0M605.5 236.0V270.0M606.5 189.0V271.0M607.5 219.6V270.0M608.5 205.0V271.0M609.5 219.3V268.0M610.5 214.6V270.0M611.5 214.4V271.0M612.5 214.3V268.0M613.5 219.7V268.0M614.5 212.5V268.0M615.5 212.3V357.0M616.5 210.4V268.0M617.5 220.9V268.0M618.5 185.0V272.0M619.5 222.6V268.0M620.5 222.4V273.0M621.5 207.3V273.0M622.5 207.1V268.0M623.5 233.0V273.0M624.5 218.1V272.0M625.5 212.5V273.0M626.5 210.7V270.0M627.5 210.6V271.0M628.5 210.4V268.0M629.5 197.9V268.0M630.5 228.6V273.0M631.5 222.2V268.0M632.5 220.6V268.0M633.5 197.4V270.0M634.5 210.2V268.0M635.5 210.1V268.0M636.5 216.9V268.0M637.5 216.8V273.0M638.5 194.4V268.0M639.5 194.3V273.0M640.5 194.1V271.0M641.5 210.3V270.0M642.5 212.9V271.0M643.5 203.1V271.0M644.5 213.1V291.0M645.5 226.2V285.0M646.5 234.4V268.0M647.5 202.6V268.0M648.5 183.0V268.0M649.5 215.5V268.0M650.5 218.9V268.0M651.5 218.8V267.0M652.5 189.0V269.0M653.5 208.5V267.0M654.5 232.5V267.0M655.5 227.8V267.0M656.5 203.9V267.0M657.5 203.8V269.0M658.5 207.5V267.0M659.5 207.4V267.0M660.5 204.5V267.0M661.5 201.0V267.0M662.5 190.4V267.0M663.5 208.3V267.0M664.5 179.0V269.0M665.5 189.6V267.0M666.5 195.0V269.0M667.5 197.0V267.0M668.5 207.1V267.0M669.5 207.0V267.0M670.5 206.9V267.0M671.5 215.7V267.0M672.5 189.1V267.0M673.5 207.8V269.0M674.5 207.8V267.0M675.5 208.9V267.0M676.5 216.8V267.0M677.5 209.7V267.0M678.5 209.7V267.0M679.5 209.6V267.0M680.5 175.0V267.0M681.5 214.2V267.0M682.5 181.0V267.0M683.5 202.7V267.0M684.5 230.3V267.0M685.5 212.7V267.0M686.5 230.5V267.0M687.5 226.5V267.0M688.5 188.8V268.0M689.5 175.0V267.0M690.5 204.0V267.0M691.5 203.9V267.0M692.5 199.8V267.0M693.5 199.7V267.0M694.5 216.7V267.0M695.5 216.7V267.0M696.5 232.8V267.0M697.5 193.8V268.0M698.5 232.0V267.0M699.5 182.2V267.0M700.5 228.7V267.0M701.5 185.0V267.0M702.5 209.4V269.0M703.5 215.6V267.0M704.5 207.7V269.0M705.5 191.0V267.0M706.5 198.5V267.0M707.5 213.3V267.0M708.5 213.2V267.0M709.5 196.4V267.0M710.5 214.3V267.0M711.5 157.0V267.0M712.5 221.1V267.0M713.5 203.0V267.0M714.5 206.0V267.0M715.5 205.9V267.0M716.5 203.8V267.0M717.5 181.0V267.0M718.5 201.3V267.0M719.5 211.8V267.0M720.5 190.7V268.0M721.5 181.5V267.0M722.5 208.4V267.0M723.5 189.6V267.0M724.5 214.3V267.0M725.5 189.0V267.0M726.5 214.2V267.0M727.5 210.1V267.0M728.5 161.0V267.0M729.5 222.4V267.0M730.5 209.1V267.0M731.5 209.1V267.0M732.5 189.0V267.0M733.5 230.0V267.0M734.5 195.9V267.0M735.5 195.8V267.0M736.5 192.0V267.0M737.5 220.3V267.0M738.5 211.5V267.0M739.5 139.0V267.0M740.5 203.0V267.0M741.5 189.5V267.0M742.5 195.5V269.0M743.5 173.0V267.0M744.5 212.7V268.0M745.5 212.6V267.0M746.5 182.7V267.0M747.5 223.0V267.0M748.5 206.0V267.0M749.5 167.5V267.0M750.5 205.9V267.0M751.5 200.5V267.0M752.5 200.4V267.0M753.5 228.7V268.0M754.5 192.1V267.0M755.5 161.0V267.0M756.5 208.0V267.0M757.5 208.0V267.0M758.5 200.2V267.0M759.5 201.1V267.0M760.5 201.0V269.0M761.5 181.7V267.0M762.5 150.0V267.0M763.5 146.7V267.0M764.5 201.0V268.0M765.5 201.0V267.0M766.5 212.6V267.0M767.5 219.4V267.0M768.5 169.0V267.0M769.5 213.1V267.0M770.5 213.8V269.0M771.5 214.5V267.0M772.5 189.2V267.0M773.5 186.2V267.0M774.5 219.7V267.0M775.5 205.0V267.0M776.5 222.7V267.0" stroke="#e00000" stroke-width="1" fill="none" shape-rendering="crispEdges"/>

<!-- cursor cross -->
<path d="M646 269.5H657M651.5 264V275" stroke="#f0f0f0" stroke-width="1" shape-rendering="crispEdges"/>

<!-- trigger T marker -->
<path d="M270 21.2H282.5V31.2L276.2 34.4L270 31.2Z" fill="#000" stroke="#9820e0" stroke-width="1.5"/>
<path d="M272.5 24.5H280M276.2 24.5V30.5" stroke="#9820e0" stroke-width="1.5" fill="none"/>

<!-- trig level arrow -->
<path d="M780.3 205.5L794 199.3V212Z" fill="#9820e0"/>

<!-- ch markers -->
<path d="M0.6 259.9H14.6L19 268L14.6 276.2H0.6Z" fill="#000" stroke="#e00000" stroke-width="1.3"/>
<path d="M6.4 266.0L9.0 263.6V274.0" fill="none" stroke="#e00000" stroke-width="2.1"/>
<path d="M0.6 462.1H14.3L19.3 470L14.3 478.1H0.6Z" fill="#000" stroke="#e0e000" stroke-width="1.2"/>
<path d="M4.5 468.2C4.5 464.6 11.8 464.6 11.8 468.0C11.8 471.0 5.0 472.4 4.5 474.9H12.2" fill="none" stroke="#e0e000" stroke-width="1.4"/>

<!-- annotation text -->
<g fill="#ffffff">
<text class="a" x="52" y="337.5" textLength="131.5" lengthAdjust="spacingAndGlyphs"><tspan font-weight="bold">п</tspan>ьезозажигалка</text>
<text class="a" x="52" y="359.5" textLength="111" lengthAdjust="spacingAndGlyphs">фен 100 град</text>
<text class="a" x="52" y="381.5" textLength="139" lengthAdjust="spacingAndGlyphs">нагрузка 10 Мом</text>
</g>

<!-- freq box -->
<rect x="647" y="499" width="125.2" height="17.6" rx="3.5" fill="#000" stroke="#5f9ea0" stroke-width="1.9"/>
<circle cx="657.5" cy="508.2" r="7.8" fill="#e00000"/>
<path d="M655.7 505.5L658.3 503.1V513.2" fill="none" stroke="#000" stroke-width="1.4"/>
<text x="668.4" y="513" fill="#f0f0f0">16.5866Hz</text>

<!-- bottom panel -->
<rect x="0" y="518.7" width="319" height="81.3" fill="#5f9ea0"/>
<rect x="2" y="579" width="315" height="19" fill="#0078e0"/>
<rect x="1.6" y="520" width="207.4" height="19" rx="6" fill="#000"/>
<rect x="1.6" y="540.3" width="207.4" height="18.5" rx="6" fill="#000"/>
<rect x="3" y="539" width="205" height="1.3" fill="#0a4a80"/>
<rect x="211" y="520" width="106" height="38.8" rx="7" fill="#000"/>
<rect x="1.6" y="561.3" width="315.4" height="18" rx="6" fill="#000"/>

<circle cx="10" cy="530" r="8" fill="#e00000"/>
<path d="M8.4 527.3L11.0 524.9V535.5" fill="none" stroke="#000" stroke-width="1.5"/>
<text x="18.6" y="535.6" fill="#e00000">100mVBW- 0.04div</text>
<circle cx="10" cy="550" r="8" fill="#e0e000"/>
<path d="M6.8 547.9C6.8 544.3 12.9 544.3 12.9 547.7C12.9 550.7 7.3 552.5 6.8 555.0H13.3" fill="none" stroke="#000" stroke-width="1.5"/>
<text x="18.6" y="555.2" fill="#e0e000">1.00ABW- -4.00div</text>
<circle cx="9.7" cy="570.3" r="8" fill="#e00000"/>
<path d="M8.1 567.6L10.7 565.2V575.8" fill="none" stroke="#000" stroke-width="1.5"/>
<text x="20.6" y="575.2" fill="#e00000">F:</text><text x="61.3" y="575.2" fill="#e00000">?</text>
<circle cx="168" cy="570.3" r="8" fill="#e0e000"/>
<path d="M164.8 568.2C164.8 564.6 170.9 564.6 170.9 568.0C170.9 571.0 165.3 572.8 164.8 575.3H171.3" fill="none" stroke="#000" stroke-width="1.5"/>
<text x="181" y="575.2" fill="#e0e000">F:</text><text x="220.8" y="575.2" fill="#e0e000">?</text>

<text x="224" y="534.4" fill="#e00000">(50KS/s)</text>
<text x="224.1" y="553.5" fill="#e00000">Depth:1M</text>

<!-- M pill -->
<rect x="320" y="520" width="99" height="18" rx="9" fill="#000"/>
<text x="338.8" y="534.2" fill="#f0f0f0">M:1.0s</text>

<!-- trig pill -->
<rect x="665" y="520" width="129" height="18" rx="9" fill="#000"/>
<circle cx="675.3" cy="528.3" r="7.8" fill="#e00000"/>
<path d="M673.4 526.1L676.0 523.7V533.8" fill="none" stroke="#000" stroke-width="1.4"/>
<path d="M685 534.5H692L696.5 522.5H704" fill="none" stroke="#f0f0f0" stroke-width="1.3"/>
<text x="707.1" y="534.3" fill="#f0f0f0">124mV</text>

<!-- Type button -->
<rect x="322.3" y="540.8" width="89.2" height="55.7" rx="3" fill="#00244c"/><rect x="322.3" y="540.8" width="87.4" height="53.7" rx="3" fill="#0050b8"/><rect x="323.2" y="541.5999999999999" width="86.5" height="52.900000000000006" rx="2.5" fill="#4c9cec"/><rect x="324.40000000000003" y="542.8" width="85.3" height="51.7" rx="2" fill="#0078e0"/>
<text x="346.3" y="562" fill="#000818">Type</text>
<rect x="341" y="571" width="50" height="19.9" fill="#e0e0e0"/>
<text x="341.9" y="585.7" fill="#000">Image</text>

<!-- Save button -->
<rect x="596.9" y="540.4" width="90.3" height="56.9" rx="3" fill="#00244c"/><rect x="596.9" y="540.4" width="88.5" height="54.9" rx="3" fill="#0050b8"/><rect x="597.8" y="541.1999999999999" width="87.6" height="54.1" rx="2.5" fill="#4c9cec"/><rect x="599.0" y="542.4" width="86.39999999999999" height="52.9" rx="2" fill="#0078e0"/>
<text x="621.2" y="574" fill="#000818">Save</text>

</svg>
</body></html>
